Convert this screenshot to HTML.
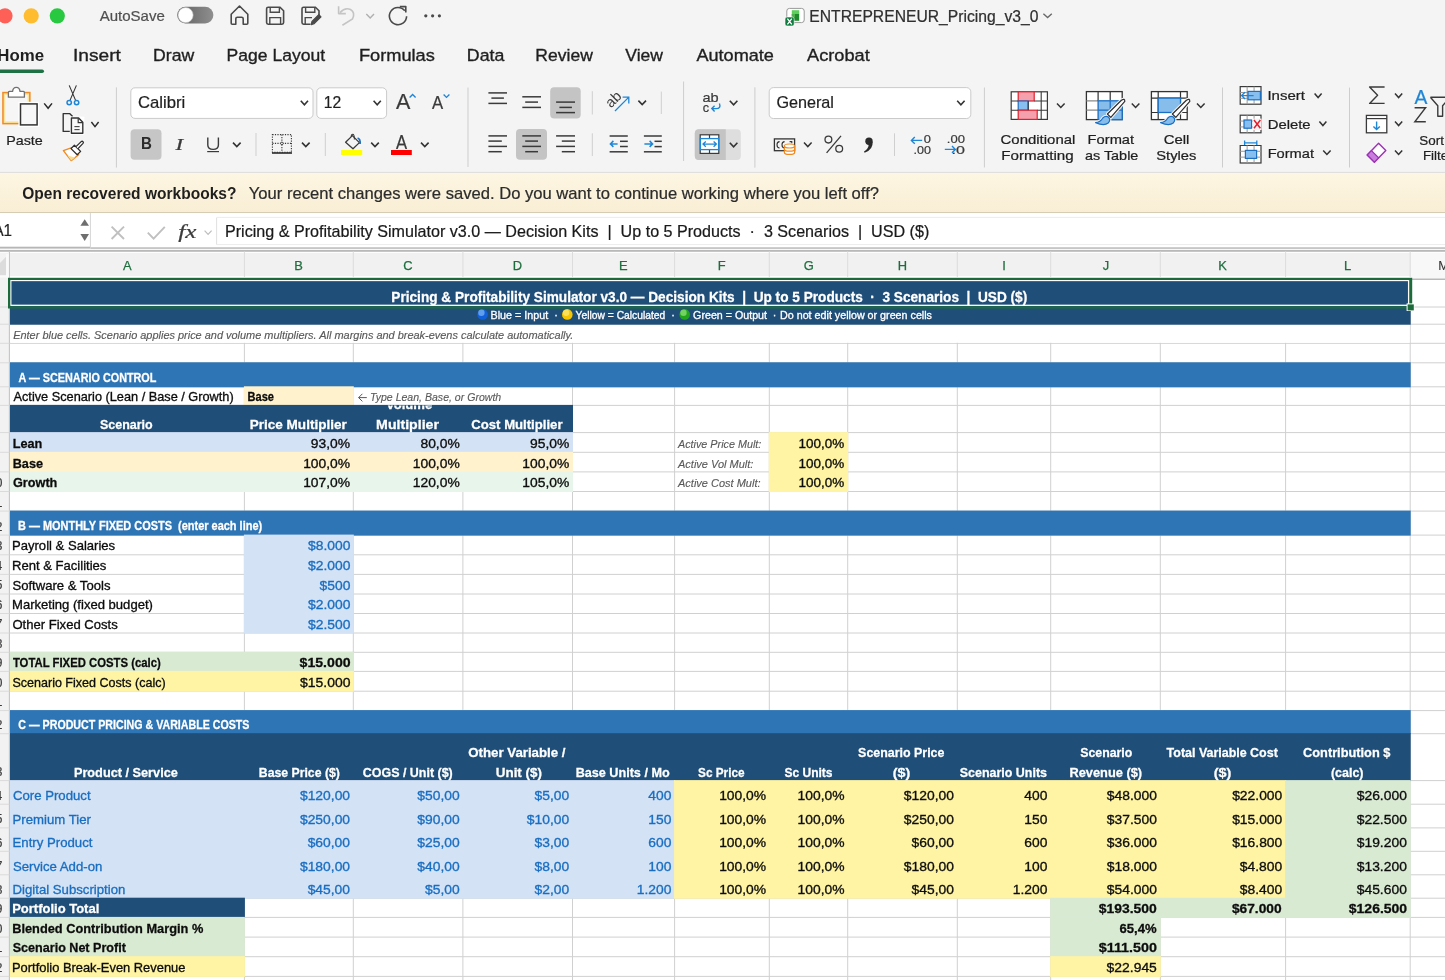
<!DOCTYPE html>
<html><head><meta charset="utf-8"><title>ENTREPRENEUR_Pricing_v3_0</title>
<style>
html,body{margin:0;padding:0;background:#f4f4f4;overflow:hidden;width:1445px;height:980px}
svg{display:block;font-family:"Liberation Sans",sans-serif;will-change:transform}
text{white-space:pre}
</style></head><body>
<svg width="1445" height="980" viewBox="0 0 1445 980">
<rect x="0.00" y="0.00" width="1445.00" height="172.50" fill="#f4f4f4" />
<circle cx="5.00" cy="15.80" r="7.60" fill="#fe5f57" />
<circle cx="31.20" cy="15.80" r="7.60" fill="#febc2e" />
<circle cx="57.30" cy="15.80" r="7.60" fill="#28c840" />
<text x="99.70" y="21.30" font-size="15.0" fill="#505050"   stroke="#505050" stroke-width="0.22">AutoSave</text>
<defs><linearGradient id="tg" x1="0" x2="1"><stop offset="0" stop-color="#5f5f5f"/><stop offset="1" stop-color="#8f8f8f"/></linearGradient><radialGradient id="bd" cx="0.35" cy="0.3" r="0.8"><stop offset="0" stop-color="#ffffff"/><stop offset="1" stop-color="#dddddd"/></radialGradient></defs>
<rect x="177.20" y="6.80" width="36.20" height="16.60" fill="url(#tg)" rx="8.3" />
<circle cx="185.60" cy="15.10" r="7.60" fill="#ffffff" stroke="#b8b8b8" stroke-width="0.6" />
<path d="M231.2 14.2 L239.5 6.0 L247.8 14.2 L247.8 23.2 Q247.8 24.2 246.8 24.2 L243.2 24.2 L243.2 18.8 Q243.2 17.2 241.6 17.2 L237.4 17.2 Q235.8 17.2 235.8 18.8 L235.8 24.2 L232.2 24.2 Q231.2 24.2 231.2 23.2 Z" stroke="#4a4a4a" fill="none" stroke-width="1.6" stroke-linejoin="round"/>
<path d="M268.2 7.2 L280.0 7.2 L283.6 10.8 L283.6 22.6 Q283.6 24.2 282.0 24.2 L268.2 24.2 Q266.6 24.2 266.6 22.6 L266.6 8.8 Q266.6 7.2 268.2 7.2 Z" stroke="#4a4a4a" fill="none" stroke-width="1.6" />
<path d="M270.2 7.6 L270.2 12.2 L279.4 12.2 L279.4 7.6" stroke="#4a4a4a" fill="none" stroke-width="1.4" />
<path d="M269.8 24.0 L269.8 17.6 L280.6 17.6 L280.6 24.0" stroke="#4a4a4a" fill="none" stroke-width="1.4" />
<path d="M303.6 7.2 L315.4 7.2 L319.0 10.8 L319.0 15.5 M310.5 24.2 L303.6 24.2 Q302.0 24.2 302.0 22.6 L302.0 8.8 Q302.0 7.2 303.6 7.2" stroke="#4a4a4a" fill="none" stroke-width="1.6" />
<path d="M305.6 7.6 L305.6 12.2 L314.8 12.2 L314.8 7.6" stroke="#4a4a4a" fill="none" stroke-width="1.4" />
<path d="M305.2 24.0 L305.2 17.6 L312.0 17.6" stroke="#4a4a4a" fill="none" stroke-width="1.4" />
<path d="M311.2 24.6 L312.0 21.4 L318.8 14.6 L321.0 16.8 L314.2 23.6 Z" stroke="#4a4a4a" fill="#4a4a4a" stroke-width="1.2" stroke-linejoin="round"/>
<path d="M340.0 12.6 Q345.0 7.0 350.5 9.5 Q355.6 12.6 352.5 19.0 L342.4 25.2" stroke="#c4c4c4" fill="none" stroke-width="1.6" />
<path d="M338.6 6.2 L338.6 13.6 L345.8 13.6" stroke="#c4c4c4" fill="none" stroke-width="1.6" stroke-linejoin="round"/>
<path d="M366.3 14.0 L370.2 18.0 L374.0 14.0" stroke="#b0b0b0" fill="none" stroke-width="1.4" />
<path d="M404.8 10.8 A8.6 8.6 0 1 0 406.6 16.2" stroke="#4a4a4a" fill="none" stroke-width="1.6" />
<path d="M399.8 6.6 L405.8 6.6 L405.8 12.4" stroke="#4a4a4a" fill="none" stroke-width="1.6" stroke-linejoin="round"/>
<circle cx="425.80" cy="15.80" r="1.60" fill="#4a4a4a" />
<circle cx="432.60" cy="15.80" r="1.60" fill="#4a4a4a" />
<circle cx="439.40" cy="15.80" r="1.60" fill="#4a4a4a" />
<rect x="786.80" y="8.40" width="17.40" height="14.20" fill="#ffffff" rx="2.6" stroke="#9a9a9a" stroke-width="1.0" />
<rect x="791.80" y="10.20" width="7.40" height="4.00" fill="#5ccf5c" />
<rect x="791.80" y="14.00" width="7.40" height="6.80" fill="#1e8a2e" />
<rect x="791.80" y="14.00" width="3.20" height="3.40" fill="#4fae4f" />
<rect x="785.00" y="17.00" width="9.20" height="9.00" fill="#0f7a3e" rx="2.0" stroke="#ffffff" stroke-width="0.6" />
<path d="M787.4 18.6 L791.8 24.4 M791.8 18.6 L787.4 24.4" stroke="#ffffff" fill="none" stroke-width="1.3" />
<text x="809.31" y="21.80" font-size="15.8" fill="#2f2f2f"  textLength="229.07" lengthAdjust="spacingAndGlyphs"  stroke="#2f2f2f" stroke-width="0.22">ENTREPRENEUR_Pricing_v3_0</text>
<path d="M1043.4 13.8 L1047.6 17.6 L1051.8 13.8" stroke="#6a6a6a" fill="none" stroke-width="1.4" />
<text x="-2.68" y="61.20" font-size="17.2" fill="#1f1f1f" font-weight="bold" textLength="46.83" lengthAdjust="spacingAndGlyphs" >Home</text>
<text x="73.03" y="61.20" font-size="17.2" fill="#1f1f1f"  textLength="47.86" lengthAdjust="spacingAndGlyphs"  stroke="#1f1f1f" stroke-width="0.35">Insert</text>
<text x="153.06" y="61.20" font-size="17.2" fill="#1f1f1f"  textLength="41.15" lengthAdjust="spacingAndGlyphs"  stroke="#1f1f1f" stroke-width="0.35">Draw</text>
<text x="226.57" y="61.20" font-size="17.2" fill="#1f1f1f"  textLength="98.51" lengthAdjust="spacingAndGlyphs"  stroke="#1f1f1f" stroke-width="0.35">Page Layout</text>
<text x="358.92" y="61.20" font-size="17.2" fill="#1f1f1f"  textLength="75.92" lengthAdjust="spacingAndGlyphs"  stroke="#1f1f1f" stroke-width="0.35">Formulas</text>
<text x="466.85" y="61.20" font-size="17.2" fill="#1f1f1f"  textLength="37.51" lengthAdjust="spacingAndGlyphs"  stroke="#1f1f1f" stroke-width="0.35">Data</text>
<text x="535.37" y="61.20" font-size="17.2" fill="#1f1f1f"  textLength="57.45" lengthAdjust="spacingAndGlyphs"  stroke="#1f1f1f" stroke-width="0.35">Review</text>
<text x="625.30" y="61.20" font-size="17.2" fill="#1f1f1f"  textLength="37.72" lengthAdjust="spacingAndGlyphs"  stroke="#1f1f1f" stroke-width="0.35">View</text>
<text x="696.40" y="61.20" font-size="17.2" fill="#1f1f1f"  textLength="77.50" lengthAdjust="spacingAndGlyphs"  stroke="#1f1f1f" stroke-width="0.35">Automate</text>
<text x="807.10" y="61.20" font-size="17.2" fill="#1f1f1f"  textLength="62.58" lengthAdjust="spacingAndGlyphs"  stroke="#1f1f1f" stroke-width="0.35">Acrobat</text>
<rect x="-4.00" y="69.40" width="48.00" height="3.60" fill="#1e7145" rx="1.8" />
<rect x="2.20" y="91.80" width="28.40" height="32.60" fill="#f08a24" />
<rect x="3.70" y="93.30" width="25.40" height="29.60" fill="#fbe39b" />
<rect x="5.20" y="94.80" width="22.40" height="26.60" fill="#f6f6f6" />
<path d="M8.4 97.2 L8.4 92.4 Q8.4 91.4 9.4 91.4 L12.6 91.4 Q13.0 87.4 16.3 87.4 Q19.6 87.4 20.0 91.4 L23.4 91.4 Q24.4 91.4 24.4 92.4 L24.4 97.2 Z" stroke="#707070" fill="#ffffff" stroke-width="1.3" stroke-linejoin="round"/>
<rect x="18.40" y="101.80" width="20.80" height="25.20" fill="#ffffff" />
<rect x="19.80" y="103.20" width="18.00" height="22.40" fill="#f7f7f7" />
<rect x="20.50" y="103.90" width="16.60" height="21.00" fill="none" stroke="#333333" stroke-width="1.5" />
<path d="M44.2 103.4 L48.1 108.2 L52.0 103.4" stroke="#2a2a2a" fill="none" stroke-width="1.5" />
<text x="6.20" y="144.50" font-size="13.0" fill="#1f1f1f"  textLength="36.58" lengthAdjust="spacingAndGlyphs"  stroke="#1f1f1f" stroke-width="0.2">Paste</text>
<path d="M69.2 85.4 L75.6 100.4 M76.4 85.4 L70.0 100.4" stroke="#333333" fill="none" stroke-width="1.1" />
<circle cx="69.20" cy="102.60" r="2.20" fill="none" stroke="#1f86d6" stroke-width="1.5" />
<circle cx="76.60" cy="102.60" r="2.20" fill="none" stroke="#1f86d6" stroke-width="1.5" />
<path d="M70.2 131.4 L63.2 131.4 L63.2 113.6 L69.6 113.6 L72.6 116.6" stroke="#333333" fill="none" stroke-width="1.4" stroke-linejoin="round"/>
<rect x="69.80" y="116.60" width="14.60" height="18.20" fill="#ffffff" />
<path d="M71.4 118.0 L78.6 118.0 L82.8 122.2 L82.8 133.2 L71.4 133.2 Z" stroke="#333333" fill="#f8f8f8" stroke-width="1.4" stroke-linejoin="round"/>
<path d="M78.2 118.2 L78.2 122.6 L82.6 122.6" stroke="#333333" fill="none" stroke-width="1.2" />
<line x1="74.40" y1="126.60" x2="79.60" y2="126.60" stroke="#444" stroke-width="1.1" />
<line x1="74.40" y1="129.60" x2="79.60" y2="129.60" stroke="#444" stroke-width="1.1" />
<path d="M91.4 122.0 L95.0 126.6 L98.6 122.0" stroke="#2a2a2a" fill="none" stroke-width="1.5" />
<path d="M63.4 150.6 L71.8 147.6 L78.6 154.8 L71.2 160.6 Z" stroke="#ef8a22" fill="#ffffff" stroke-width="1.4" stroke-linejoin="round"/>
<path d="M67.4 155.4 L75.2 157.6 L71.2 160.6 Z" stroke="none" fill="#f9dc8c" stroke-width="1" />
<path d="M71.0 148.6 L74.4 145.2 L80.6 151.4 L77.2 154.8 Z" stroke="#2e2e2e" fill="#ffffff" stroke-width="1.3" stroke-linejoin="round"/>
<path d="M76.0 146.6 L81.2 141.6 Q82.2 140.8 83.0 141.6 Q83.8 142.4 83.0 143.4 L78.0 148.6" stroke="#2e2e2e" fill="#ffffff" stroke-width="1.3" stroke-linejoin="round"/>
<line x1="116.40" y1="87.40" x2="116.40" y2="167.60" stroke="#cdcdcd" stroke-width="1" />
<rect x="130.80" y="87.80" width="182.20" height="30.60" fill="#ffffff" rx="4.2" stroke="#cacaca" stroke-width="1" />
<text x="137.90" y="108.40" font-size="16.6" fill="#1f1f1f"  textLength="47.30" lengthAdjust="spacingAndGlyphs"  stroke="#1f1f1f" stroke-width="0.22">Calibri</text>
<path d="M300.8 100.8 L304.4 104.8 L308.0 100.8" stroke="#333" fill="none" stroke-width="1.6" />
<rect x="316.80" y="87.80" width="69.80" height="30.60" fill="#ffffff" rx="4.2" stroke="#cacaca" stroke-width="1" />
<text x="323.77" y="108.40" font-size="16.6" fill="#1f1f1f"  textLength="17.42" lengthAdjust="spacingAndGlyphs"  stroke="#1f1f1f" stroke-width="0.22">12</text>
<path d="M373.6 100.8 L377.2 104.8 L380.8 100.8" stroke="#333" fill="none" stroke-width="1.6" />
<text x="395.90" y="109.30" font-size="22.4" fill="#3a3a3a"  textLength="14.34" lengthAdjust="spacingAndGlyphs"  stroke="#3a3a3a" stroke-width="0.22">A</text>
<path d="M409.6 97.6 L412.6 94.6 L415.6 97.6" stroke="#1f86d6" fill="none" stroke-width="1.4" />
<text x="432.00" y="109.30" font-size="17.6" fill="#3a3a3a"  textLength="11.14" lengthAdjust="spacingAndGlyphs"  stroke="#3a3a3a" stroke-width="0.22">A</text>
<path d="M443.6 94.6 L446.5 97.4 L449.4 94.6" stroke="#1f86d6" fill="none" stroke-width="1.4" />
<rect x="130.60" y="129.20" width="30.90" height="30.50" fill="#c6c6c6" rx="4" />
<text x="140.88" y="149.10" font-size="16.4" fill="#2a2a2a" font-weight="bold" textLength="10.91" lengthAdjust="spacingAndGlyphs" >B</text>
<text x="175.53" y="150.00" font-size="17.4" fill="#3a3a3a" font-style="italic" font-family="Liberation Serif" textLength="7.64" lengthAdjust="spacingAndGlyphs"  stroke="#3a3a3a" stroke-width="0.22">I</text>
<path d="M207.8 137.4 L207.8 145.0 Q207.8 149.4 213.1 149.4 Q218.4 149.4 218.4 145.0 L218.4 137.4" stroke="#3a3a3a" fill="none" stroke-width="1.4" />
<line x1="207.20" y1="151.60" x2="219.00" y2="151.60" stroke="#3a3a3a" stroke-width="1.2" />
<path d="M233.0 142.6 L236.8 146.6 L240.6 142.6" stroke="#333" fill="none" stroke-width="1.6" />
<line x1="256.00" y1="133.00" x2="256.00" y2="156.00" stroke="#cfcfcf" stroke-width="1" />
<g stroke="#3a3a3a" stroke-width="1.1" stroke-dasharray="1.2 1.3" fill="none"><rect x="272.4" y="134.6" width="19.0" height="17.6"/><line x1="281.9" y1="134.6" x2="281.9" y2="152"/><line x1="272.4" y1="143.4" x2="291.4" y2="143.4"/></g>
<line x1="272.00" y1="153.00" x2="292.00" y2="153.00" stroke="#2a2a2a" stroke-width="1.6" />
<circle cx="281.90" cy="143.40" r="1.30" fill="#ffffff" stroke="#3a3a3a" stroke-width="0.9" />
<path d="M302.0 142.6 L305.8 146.6 L309.6 142.6" stroke="#333" fill="none" stroke-width="1.6" />
<line x1="325.30" y1="133.00" x2="325.30" y2="156.00" stroke="#cfcfcf" stroke-width="1" />
<path d="M345.6 142.2 L352.4 135.6 L359.4 142.6 L353.0 148.8 Z" stroke="#3a3a3a" fill="none" stroke-width="1.3" stroke-linejoin="round"/>
<path d="M351.2 136.8 Q351.2 134.2 352.8 134.2 Q354.4 134.2 354.4 139.6" stroke="#3a3a3a" fill="none" stroke-width="1.1" />
<path d="M357.6 138.0 Q360.6 139.0 360.0 144.0" stroke="#1f6fbf" fill="none" stroke-width="1.8" />
<rect x="341.00" y="150.00" width="21.20" height="5.00" fill="#ffff00" />
<path d="M371.2 142.6 L375.0 146.6 L378.8 142.6" stroke="#333" fill="none" stroke-width="1.6" />
<text x="395.90" y="148.50" font-size="19.6" fill="#3a3a3a"  textLength="11.08" lengthAdjust="spacingAndGlyphs"  stroke="#3a3a3a" stroke-width="0.22">A</text>
<rect x="391.00" y="150.00" width="20.80" height="5.00" fill="#ff0000" />
<path d="M421.0 142.6 L424.8 146.6 L428.6 142.6" stroke="#333" fill="none" stroke-width="1.6" />
<line x1="468.00" y1="87.50" x2="468.00" y2="167.00" stroke="#cdcdcd" stroke-width="1" />
<line x1="488.40" y1="92.90" x2="507.00" y2="92.90" stroke="#3a3a3a" stroke-width="1.5" />
<line x1="491.40" y1="98.10" x2="503.90" y2="98.10" stroke="#3a3a3a" stroke-width="1.5" />
<line x1="488.40" y1="103.40" x2="507.00" y2="103.40" stroke="#3a3a3a" stroke-width="1.5" />
<line x1="522.30" y1="96.80" x2="541.00" y2="96.80" stroke="#3a3a3a" stroke-width="1.5" />
<line x1="525.20" y1="102.10" x2="538.00" y2="102.10" stroke="#3a3a3a" stroke-width="1.5" />
<line x1="522.30" y1="107.40" x2="541.00" y2="107.40" stroke="#3a3a3a" stroke-width="1.5" />
<rect x="550.20" y="87.20" width="30.50" height="31.20" fill="#c4c4c4" rx="4" />
<line x1="556.10" y1="102.10" x2="575.00" y2="102.10" stroke="#3a3a3a" stroke-width="1.5" />
<line x1="559.40" y1="107.40" x2="571.90" y2="107.40" stroke="#3a3a3a" stroke-width="1.5" />
<line x1="556.10" y1="112.60" x2="575.00" y2="112.60" stroke="#3a3a3a" stroke-width="1.5" />
<line x1="592.30" y1="91.20" x2="592.30" y2="114.50" stroke="#cfcfcf" stroke-width="1" />
<text x="0" y="0" font-size="14.6" fill="#3a3a3a" transform="translate(611.0,108.4) rotate(-45)">ab</text>
<path d="M615.0 111.0 L628.6 97.4 M622.6 97.2 L628.8 97.2 L628.8 103.4" stroke="#1f86d6" fill="none" stroke-width="1.3" />
<path d="M638.4 100.6 L642.2 104.6 L646.0 100.6" stroke="#333" fill="none" stroke-width="1.6" />
<line x1="488.40" y1="135.90" x2="507.00" y2="135.90" stroke="#3a3a3a" stroke-width="1.5" />
<line x1="488.40" y1="141.10" x2="501.80" y2="141.10" stroke="#3a3a3a" stroke-width="1.5" />
<line x1="488.40" y1="146.40" x2="507.00" y2="146.40" stroke="#3a3a3a" stroke-width="1.5" />
<line x1="488.40" y1="151.70" x2="501.80" y2="151.70" stroke="#3a3a3a" stroke-width="1.5" />
<rect x="516.00" y="128.90" width="31.00" height="30.90" fill="#c4c4c4" rx="4" />
<line x1="522.30" y1="135.90" x2="541.00" y2="135.90" stroke="#3a3a3a" stroke-width="1.5" />
<line x1="525.20" y1="141.10" x2="538.00" y2="141.10" stroke="#3a3a3a" stroke-width="1.5" />
<line x1="522.30" y1="146.40" x2="541.00" y2="146.40" stroke="#3a3a3a" stroke-width="1.5" />
<line x1="525.20" y1="151.70" x2="538.00" y2="151.70" stroke="#3a3a3a" stroke-width="1.5" />
<line x1="556.10" y1="135.90" x2="575.00" y2="135.90" stroke="#3a3a3a" stroke-width="1.5" />
<line x1="561.80" y1="141.10" x2="575.00" y2="141.10" stroke="#3a3a3a" stroke-width="1.5" />
<line x1="556.10" y1="146.40" x2="575.00" y2="146.40" stroke="#3a3a3a" stroke-width="1.5" />
<line x1="561.80" y1="151.70" x2="575.00" y2="151.70" stroke="#3a3a3a" stroke-width="1.5" />
<line x1="592.30" y1="133.30" x2="592.30" y2="156.00" stroke="#cfcfcf" stroke-width="1" />
<line x1="609.60" y1="136.00" x2="627.80" y2="136.00" stroke="#3a3a3a" stroke-width="1.5" />
<line x1="620.00" y1="141.30" x2="627.80" y2="141.30" stroke="#3a3a3a" stroke-width="1.5" />
<line x1="620.00" y1="146.50" x2="627.80" y2="146.50" stroke="#3a3a3a" stroke-width="1.5" />
<line x1="609.60" y1="151.80" x2="627.80" y2="151.80" stroke="#3a3a3a" stroke-width="1.5" />
<path d="M617.6 143.9 L610.4 143.9 M613.4 140.9 L610.4 143.9 L613.4 146.9" stroke="#1f86d6" fill="none" stroke-width="1.5" />
<line x1="643.90" y1="136.00" x2="661.80" y2="136.00" stroke="#3a3a3a" stroke-width="1.5" />
<line x1="654.50" y1="141.30" x2="661.80" y2="141.30" stroke="#3a3a3a" stroke-width="1.5" />
<line x1="654.50" y1="146.60" x2="661.80" y2="146.60" stroke="#3a3a3a" stroke-width="1.5" />
<line x1="643.90" y1="151.80" x2="661.80" y2="151.80" stroke="#3a3a3a" stroke-width="1.5" />
<path d="M644.4 143.9 L652.6 143.9 M649.6 140.9 L652.6 143.9 L649.6 146.9" stroke="#1f86d6" fill="none" stroke-width="1.5" />
<line x1="661.30" y1="91.60" x2="661.30" y2="114.00" stroke="#cfcfcf" stroke-width="1" />
<line x1="683.60" y1="81.50" x2="683.60" y2="161.00" stroke="#cdcdcd" stroke-width="1" />
<text x="702.42" y="101.80" font-size="12.6" fill="#3a3a3a"  textLength="16.16" lengthAdjust="spacingAndGlyphs"  stroke="#3a3a3a" stroke-width="0.22">ab</text>
<text x="702.70" y="112.00" font-size="12.6" fill="#3a3a3a"   stroke="#3a3a3a" stroke-width="0.22">c</text>
<path d="M719.4 103.6 Q721.4 108.6 716.0 108.6 L712.0 108.6 M714.6 105.8 L711.8 108.6 L714.6 111.6" stroke="#1f86d6" fill="none" stroke-width="1.4" />
<path d="M729.8 100.8 L733.6 104.8 L737.4 100.8" stroke="#333" fill="none" stroke-width="1.6" />
<rect x="694.80" y="129.30" width="46.00" height="30.70" fill="#dedede" rx="4" />
<path d="M698.8 129.3 L725.8 129.3 L725.8 160 L698.8 160 Q694.8 160 694.8 156 L694.8 133.3 Q694.8 129.3 698.8 129.3 Z" stroke="none" fill="#c4c4c4" stroke-width="1" />
<rect x="700.20" y="134.80" width="18.60" height="18.60" fill="#ffffff" stroke="#3a3a3a" stroke-width="1.2" />
<line x1="709.50" y1="134.80" x2="709.50" y2="153.40" stroke="#3a3a3a" stroke-width="1.2" />
<rect x="700.00" y="138.40" width="19.00" height="11.40" fill="#ffffff" />
<rect x="700.40" y="138.60" width="18.20" height="11.00" fill="none" stroke="#1f86d6" stroke-width="1.3" />
<path d="M703.0 144.1 L716.4 144.1 M705.8 141.5 L703.0 144.1 L705.8 146.7 M713.6 141.5 L716.4 144.1 L713.6 146.7" stroke="#1f86d6" fill="none" stroke-width="1.3" />
<path d="M729.8 142.8 L733.6 146.8 L737.4 142.8" stroke="#333" fill="none" stroke-width="1.6" />
<line x1="754.90" y1="87.30" x2="754.90" y2="167.70" stroke="#cdcdcd" stroke-width="1" />
<rect x="769.20" y="87.60" width="201.60" height="30.90" fill="#ffffff" rx="4.2" stroke="#cacaca" stroke-width="1" />
<text x="776.42" y="108.20" font-size="16.6" fill="#1f1f1f"  textLength="57.54" lengthAdjust="spacingAndGlyphs"  stroke="#1f1f1f" stroke-width="0.22">General</text>
<path d="M957.2 100.8 L960.9 104.8 L964.6 100.8" stroke="#333" fill="none" stroke-width="1.6" />
<rect x="774.40" y="138.90" width="20.20" height="11.80" fill="none" stroke="#333333" stroke-width="1.3" />
<path d="M779.6 141.6 Q777.0 141.6 777.0 144.8 Q777.0 148.0 779.6 148.0 M784.6 141.6 Q782.0 141.6 782.0 144.8 Q782.0 148.0 784.6 148.0 M789.6 141.6 L791.8 141.6 L791.8 143.2" stroke="#333333" stroke-width="1.1" fill="none"/>
<g stroke="#ef8a22" stroke-width="1.2" fill="#ffffff"><path d="M784.4 146.0 L784.4 152.4 Q784.4 154.4 789.5 154.4 Q794.6 154.4 794.6 152.4 L794.6 146.0 Z"/><ellipse cx="789.5" cy="146.0" rx="5.1" ry="2.0"/><path d="M784.4 149.2 Q784.4 151.2 789.5 151.2 Q794.6 151.2 794.6 149.2" fill="none"/></g>
<path d="M804.0 142.6 L807.8 146.6 L811.6 142.6" stroke="#333" fill="none" stroke-width="1.5" />
<circle cx="828.40" cy="139.60" r="3.40" fill="none" stroke="#3a3a3a" stroke-width="1.3" />
<circle cx="839.20" cy="148.80" r="3.40" fill="none" stroke="#3a3a3a" stroke-width="1.3" />
<line x1="841.00" y1="135.80" x2="826.60" y2="152.80" stroke="#3a3a3a" stroke-width="1.3" />
<circle cx="869.00" cy="141.20" r="3.70" fill="#2a2a2a" />
<path d="M872.6 141.8 Q873.4 149.6 864.6 152.8 L864.0 151.6 Q868.8 148.4 868.6 144.4 Z" stroke="none" fill="#2a2a2a" stroke-width="1" />
<line x1="894.50" y1="133.30" x2="894.50" y2="156.00" stroke="#cfcfcf" stroke-width="1" />
<text x="923.87" y="143.10" font-size="11.8" fill="#3a3a3a"  textLength="7.13" lengthAdjust="spacingAndGlyphs"  stroke="#3a3a3a" stroke-width="0.22">0</text>
<text x="913.54" y="153.50" font-size="11.8" fill="#3a3a3a"  textLength="17.45" lengthAdjust="spacingAndGlyphs"  stroke="#3a3a3a" stroke-width="0.22">.00</text>
<path d="M922.2 140.4 L911.4 140.4 M914.8 137.0 L911.4 140.4 L914.8 143.8" stroke="#1f86d6" fill="none" stroke-width="1.4" />
<text x="946.80" y="143.10" font-size="11.8" fill="#3a3a3a"  textLength="18.10" lengthAdjust="spacingAndGlyphs"  stroke="#3a3a3a" stroke-width="0.22">.00</text>
<text x="951.64" y="153.50" font-size="11.8" fill="#3a3a3a"  textLength="13.35" lengthAdjust="spacingAndGlyphs"  stroke="#3a3a3a" stroke-width="0.22">.0</text>
<path d="M944.8 149.4 L955.4 149.4 M952.0 146.0 L955.4 149.4 L952.0 152.8" stroke="#1f86d6" fill="none" stroke-width="1.4" />
<line x1="984.40" y1="87.50" x2="984.40" y2="167.50" stroke="#cdcdcd" stroke-width="1" />
<g transform="translate(1011.2,91.8)"><rect x="0" y="0" width="36.2" height="27.6" fill="#ffffff" stroke="#3a3a3a" stroke-width="1.2"/><rect x="7" y="0" width="16" height="9.2" fill="#f4a1ad" stroke="#e0202e" stroke-width="1.2"/><rect x="7" y="9.2" width="10" height="9.2" fill="#86bff0" stroke="#1f6fbf" stroke-width="1.2"/><rect x="7" y="18.4" width="19" height="9.2" fill="#f4a1ad" stroke="#e0202e" stroke-width="1.2"/><path d="M0 9.2 H7 M0 18.4 H7 M23 9.2 H36.2 M26 18.4 H36.2 M30 0 V27.6 M17 9.2 V18.4" stroke="#3a3a3a" stroke-width="1.1"/></g>
<path d="M1057.0 103.4 L1060.8 107.4 L1064.6 103.4" stroke="#333" fill="none" stroke-width="1.5" />
<text x="1000.59" y="144.40" font-size="12.6" fill="#1f1f1f"  textLength="74.76" lengthAdjust="spacingAndGlyphs"  stroke="#1f1f1f" stroke-width="0.22">Conditional</text>
<text x="1001.20" y="159.70" font-size="12.6" fill="#1f1f1f"  textLength="72.48" lengthAdjust="spacingAndGlyphs"  stroke="#1f1f1f" stroke-width="0.22">Formatting</text>
<g transform="translate(1086.4,91.6)"><rect x="0" y="0" width="35.8" height="28" fill="#ffffff" stroke="#333333" stroke-width="1.3"/><path d="M0 9.2 H11.7 M0 18.6 H11.7" stroke="#8a8a8a" stroke-width="1.2"/><path d="M11.7 0 V9.2 M23.8 0 V9.2" stroke="#333333" stroke-width="1.2"/><rect x="11.7" y="9.2" width="24.1" height="18.8" fill="#86bdea" stroke="#1a6fc4" stroke-width="1.3"/><path d="M11.7 18.6 H35.8 M23.8 9.2 V28" stroke="#1a6fc4" stroke-width="1.2"/><path d="M21.0 22.4 L35.0 8.6 Q38.6 6.4 38.4 9.8 L24.4 25.8 Z M9.2 31.0 Q14.0 30.6 16.4 26.4 Q19.0 23.6 22.0 25.4 Q24.8 28.2 21.8 31.4 Q17.6 34.8 9.2 31.0 Z" fill="#ffffff" stroke="#f4f4f4" stroke-width="3.2" stroke-linejoin="round"/><path d="M21.0 22.4 L35.0 8.6 Q38.6 6.4 38.4 9.8 L24.4 25.8 Z" fill="#ffffff" stroke="#2e2e2e" stroke-width="1.2" stroke-linejoin="round"/><path d="M9.2 31.0 Q14.0 30.6 16.4 26.4 Q19.0 23.6 22.0 25.4 Q24.8 28.2 21.8 31.4 Q17.6 34.8 9.2 31.0 Z" fill="#86bdea" stroke="#1a6fc4" stroke-width="1.2" stroke-linejoin="round"/></g>
<path d="M1131.8 103.4 L1135.6 107.4 L1139.4 103.4" stroke="#333" fill="none" stroke-width="1.5" />
<text x="1087.64" y="144.40" font-size="12.6" fill="#1f1f1f"  textLength="46.47" lengthAdjust="spacingAndGlyphs"  stroke="#1f1f1f" stroke-width="0.22">Format</text>
<text x="1084.93" y="159.70" font-size="12.6" fill="#1f1f1f"  textLength="53.45" lengthAdjust="spacingAndGlyphs"  stroke="#1f1f1f" stroke-width="0.22">as Table</text>
<g transform="translate(1151.4,91.6)"><rect x="0" y="0" width="35.8" height="28" fill="#ffffff" stroke="#333333" stroke-width="1.3"/><path d="M0 6.5 H35.8 M0 20.9 H35.8 M6.8 0 V28 M29.1 0 V28" stroke="#333333" stroke-width="1.2"/><rect x="6.8" y="6.5" width="22.3" height="14.4" fill="#86bdea" stroke="#1a6fc4" stroke-width="1.3"/><path d="M21.0 22.4 L35.0 8.6 Q38.6 6.4 38.4 9.8 L24.4 25.8 Z M9.2 31.0 Q14.0 30.6 16.4 26.4 Q19.0 23.6 22.0 25.4 Q24.8 28.2 21.8 31.4 Q17.6 34.8 9.2 31.0 Z" fill="#ffffff" stroke="#f4f4f4" stroke-width="3.2" stroke-linejoin="round"/><path d="M21.0 22.4 L35.0 8.6 Q38.6 6.4 38.4 9.8 L24.4 25.8 Z" fill="#ffffff" stroke="#2e2e2e" stroke-width="1.2" stroke-linejoin="round"/><path d="M9.2 31.0 Q14.0 30.6 16.4 26.4 Q19.0 23.6 22.0 25.4 Q24.8 28.2 21.8 31.4 Q17.6 34.8 9.2 31.0 Z" fill="#86bdea" stroke="#1a6fc4" stroke-width="1.2" stroke-linejoin="round"/></g>
<path d="M1197.0 103.4 L1200.8 107.4 L1204.6 103.4" stroke="#333" fill="none" stroke-width="1.5" />
<text x="1163.69" y="144.40" font-size="12.6" fill="#1f1f1f"  textLength="25.76" lengthAdjust="spacingAndGlyphs"  stroke="#1f1f1f" stroke-width="0.22">Cell</text>
<text x="1156.32" y="159.70" font-size="12.6" fill="#1f1f1f"  textLength="40.05" lengthAdjust="spacingAndGlyphs"  stroke="#1f1f1f" stroke-width="0.22">Styles</text>
<line x1="1222.50" y1="87.50" x2="1222.50" y2="167.50" stroke="#cdcdcd" stroke-width="1" />
<g transform="translate(1240.2,86.6)"><rect x="0" y="0" width="20.8" height="17.6" fill="#ffffff" stroke="#3a3a3a" stroke-width="1.2"/><path d="M0 5.87 H20.8 M0 11.73 H20.8 M6.93 0 V17.6 M13.87 0 V17.6" stroke="#9a9a9a" stroke-width="1.0"/></g>
<rect x="1248.00" y="91.40" width="12.40" height="8.40" fill="#86bff0" />
<rect x="1248.00" y="91.40" width="12.40" height="8.40" fill="none" stroke="#1f6fbf" stroke-width="1.2" />
<path d="M1253.6 95.6 L1241.6 95.6 M1245.0 92.2 L1241.6 95.6 L1245.0 99.0" stroke="#1f86d6" fill="none" stroke-width="1.4" />
<text x="1267.42" y="100.10" font-size="13.0" fill="#1f1f1f"  textLength="37.50" lengthAdjust="spacingAndGlyphs"  stroke="#1f1f1f" stroke-width="0.22">Insert</text>
<path d="M1314.6 93.6 L1318.1 97.6 L1321.6 93.6" stroke="#333" fill="none" stroke-width="1.5" />
<g transform="translate(1240.2,115.2)"><rect x="0" y="0" width="20.8" height="17.6" fill="#ffffff" stroke="#3a3a3a" stroke-width="1.2"/><path d="M0 5.87 H20.8 M0 11.73 H20.8 M6.93 0 V17.6 M13.87 0 V17.6" stroke="#9a9a9a" stroke-width="1.0"/></g>
<rect x="1244.00" y="120.00" width="7.60" height="8.20" fill="#86bff0" />
<rect x="1244.00" y="120.00" width="7.60" height="8.20" fill="none" stroke="#1f6fbf" stroke-width="1.2" />
<rect x="1252.60" y="118.60" width="9.00" height="11.40" fill="#f4f4f4" />
<path d="M1254.0 120.0 L1260.4 128.2 M1260.4 120.0 L1254.0 128.2" stroke="#e0202e" fill="none" stroke-width="1.5" />
<text x="1267.66" y="129.00" font-size="13.0" fill="#1f1f1f"  textLength="42.95" lengthAdjust="spacingAndGlyphs"  stroke="#1f1f1f" stroke-width="0.22">Delete</text>
<path d="M1319.4 121.6 L1322.9 125.6 L1326.4 121.6" stroke="#333" fill="none" stroke-width="1.5" />
<g transform="translate(1240.2,145.4)"><rect x="0" y="0" width="20.8" height="17.6" fill="#ffffff" stroke="#3a3a3a" stroke-width="1.2"/><path d="M0 5.87 H20.8 M0 11.73 H20.8 M6.93 0 V17.6 M13.87 0 V17.6" stroke="#9a9a9a" stroke-width="1.0"/></g>
<rect x="1245.40" y="150.40" width="11.20" height="8.00" fill="#86bff0" />
<rect x="1245.40" y="150.40" width="11.20" height="8.00" fill="none" stroke="#1f6fbf" stroke-width="1.2" />
<rect x="1238.60" y="140.80" width="23.80" height="4.20" fill="#f4f4f4" />
<path d="M1244.6 142.8 L1256.8 142.8 M1244.6 140.6 V145.0 M1256.8 140.6 V145.0" stroke="#1f86d6" fill="none" stroke-width="1.3" />
<text x="1267.67" y="157.60" font-size="13.0" fill="#1f1f1f"  textLength="46.34" lengthAdjust="spacingAndGlyphs"  stroke="#1f1f1f" stroke-width="0.22">Format</text>
<path d="M1323.2 150.4 L1326.9 154.4 L1330.6 150.4" stroke="#333" fill="none" stroke-width="1.5" />
<line x1="1349.50" y1="87.60" x2="1349.50" y2="167.50" stroke="#cdcdcd" stroke-width="1" />
<path d="M1384.6 87.0 L1369.6 87.0 L1377.6 95.2 L1369.6 103.4 L1384.6 103.4" stroke="#3a3a3a" fill="none" stroke-width="1.4" stroke-linejoin="round"/>
<path d="M1395.0 93.6 L1398.6 97.6 L1402.2 93.6" stroke="#333" fill="none" stroke-width="1.5" />
<rect x="1366.40" y="115.40" width="20.40" height="17.40" fill="#ffffff" stroke="#3a3a3a" stroke-width="1.3" />
<line x1="1366.40" y1="118.60" x2="1386.80" y2="118.60" stroke="#3a3a3a" stroke-width="1.2" />
<path d="M1376.6 121.6 L1376.6 129.6 M1373.4 126.4 L1376.6 129.6 L1379.8 126.4" stroke="#1f86d6" fill="none" stroke-width="1.4" />
<path d="M1395.0 121.6 L1398.6 125.6 L1402.2 121.6" stroke="#333" fill="none" stroke-width="1.5" />
<path d="M1367.2 155.0 L1378.6 143.2 L1385.8 150.4 L1374.4 162.2 Z" stroke="#9b30b5" fill="#ffffff" stroke-width="1.4" stroke-linejoin="round"/>
<path d="M1367.2 155.0 L1371.4 150.6 L1378.6 157.8 L1374.4 162.2 Z" stroke="#9b30b5" fill="#c77fdb" stroke-width="1.2" />
<path d="M1395.0 150.4 L1398.6 154.4 L1402.2 150.4" stroke="#333" fill="none" stroke-width="1.5" />
<text x="1414.60" y="104.00" font-size="19.6" fill="#1f86d6"  textLength="12.87" lengthAdjust="spacingAndGlyphs"  stroke="#1f86d6" stroke-width="0.22">A</text>
<path d="M1414.6 107.8 L1425.6 107.8 L1414.8 121.8 L1425.8 121.8" stroke="#3a3a3a" fill="none" stroke-width="1.4" />
<path d="M1430.4 97.2 L1446 97.2 M1430.4 97.2 L1437.8 105.8 L1437.8 116.2 L1442.6 116.2 L1442.6 105.8 L1446 101.8" stroke="#3a3a3a" fill="none" stroke-width="1.4" stroke-linejoin="round"/>
<text x="1419.30" y="144.80" font-size="13.4" fill="#1f1f1f"   stroke="#1f1f1f" stroke-width="0.22">Sort &amp;</text>
<text x="1422.90" y="160.00" font-size="13.4" fill="#1f1f1f"   stroke="#1f1f1f" stroke-width="0.22">Filter</text>
<line x1="0.00" y1="172.40" x2="1445.00" y2="172.40" stroke="#d9d9d9" stroke-width="1" />
<defs><linearGradient id="nb" x1="0" y1="0" x2="0" y2="1"><stop offset="0" stop-color="#fdf6e2"/><stop offset="1" stop-color="#f9eed5"/></linearGradient></defs>
<rect x="0.00" y="172.90" width="1445.00" height="39.90" fill="url(#nb)" />
<line x1="0.00" y1="212.60" x2="1445.00" y2="212.60" stroke="#d6ccb4" stroke-width="1.1" />
<text x="22.22" y="199.30" font-size="16.2" fill="#1e1e1e" font-weight="bold" textLength="214.24" lengthAdjust="spacingAndGlyphs" >Open recovered workbooks?</text>
<text x="248.79" y="199.30" font-size="16.2" fill="#2c2c2c"  textLength="630.23" lengthAdjust="spacingAndGlyphs"  stroke="#2c2c2c" stroke-width="0.22">Your recent changes were saved. Do you want to continue working where you left off?</text>
<rect x="0.00" y="213.10" width="1445.00" height="33.90" fill="#ffffff" />
<line x1="90.40" y1="213.10" x2="90.40" y2="247.00" stroke="#d5d5d5" stroke-width="1" />
<text x="-6.53" y="235.90" font-size="16.0" fill="#222222"  textLength="18.59" lengthAdjust="spacingAndGlyphs"  stroke="#222222" stroke-width="0.22">A1</text>
<path d="M80.4 225.8 L84.7 219.3 L89.0 225.8 Z" stroke="none" fill="#6e6e6e" stroke-width="1" />
<path d="M80.4 234.0 L84.7 240.9 L89.0 234.0 Z" stroke="none" fill="#6e6e6e" stroke-width="1" />
<path d="M111.6 226.6 L124.0 239.0 M124.0 226.6 L111.6 239.0" stroke="#c0c0c0" fill="none" stroke-width="1.9" />
<path d="M147.8 232.6 L153.6 238.6 L164.8 226.8" stroke="#c0c0c0" fill="none" stroke-width="1.9" />
<text x="178.24" y="238.00" font-size="19.0" fill="#3c3c3c" font-style="italic" font-family="Liberation Serif" textLength="18.14" lengthAdjust="spacingAndGlyphs"  stroke="#3c3c3c" stroke-width="0.22">fx</text>
<path d="M204.6 230.6 L208.1 234.4 L211.6 230.6" stroke="#bdbdbd" fill="none" stroke-width="1.2" />
<rect x="216.40" y="217.60" width="1228.60" height="27.00" fill="#ffffff" />
<line x1="216.60" y1="217.60" x2="216.60" y2="244.60" stroke="#e1e1e1" stroke-width="1" />
<line x1="216.60" y1="217.40" x2="1445.00" y2="217.40" stroke="#ececec" stroke-width="1" />
<line x1="216.60" y1="244.60" x2="1445.00" y2="244.60" stroke="#ececec" stroke-width="1" />
<text x="225.01" y="236.60" font-size="16.2" fill="#1a1a1a"  textLength="704.28" lengthAdjust="spacingAndGlyphs"  stroke="#1a1a1a" stroke-width="0.22">Pricing &amp; Profitability Simulator v3.0 — Decision Kits  |  Up to 5 Products  ·  3 Scenarios  |  USD ($)</text>
<rect x="10.00" y="251.00" width="1435.00" height="729.00" fill="#ffffff" />
<line x1="244.40" y1="278.00" x2="244.40" y2="980.00" stroke="#d0d0d0" stroke-width="1" />
<line x1="353.30" y1="278.00" x2="353.30" y2="980.00" stroke="#d0d0d0" stroke-width="1" />
<line x1="462.90" y1="278.00" x2="462.90" y2="980.00" stroke="#d0d0d0" stroke-width="1" />
<line x1="572.50" y1="278.00" x2="572.50" y2="980.00" stroke="#d0d0d0" stroke-width="1" />
<line x1="674.60" y1="278.00" x2="674.60" y2="980.00" stroke="#d0d0d0" stroke-width="1" />
<line x1="769.30" y1="278.00" x2="769.30" y2="980.00" stroke="#d0d0d0" stroke-width="1" />
<line x1="847.70" y1="278.00" x2="847.70" y2="980.00" stroke="#d0d0d0" stroke-width="1" />
<line x1="957.30" y1="278.00" x2="957.30" y2="980.00" stroke="#d0d0d0" stroke-width="1" />
<line x1="1050.70" y1="278.00" x2="1050.70" y2="980.00" stroke="#d0d0d0" stroke-width="1" />
<line x1="1160.30" y1="278.00" x2="1160.30" y2="980.00" stroke="#d0d0d0" stroke-width="1" />
<line x1="1285.60" y1="278.00" x2="1285.60" y2="980.00" stroke="#d0d0d0" stroke-width="1" />
<line x1="1410.20" y1="278.00" x2="1410.20" y2="980.00" stroke="#d0d0d0" stroke-width="1" />
<line x1="1545.00" y1="278.00" x2="1545.00" y2="980.00" stroke="#d0d0d0" stroke-width="1" />
<line x1="10.00" y1="307.00" x2="1445.00" y2="307.00" stroke="#d0d0d0" stroke-width="1" />
<line x1="10.00" y1="324.20" x2="1445.00" y2="324.20" stroke="#d0d0d0" stroke-width="1" />
<line x1="10.00" y1="343.30" x2="1445.00" y2="343.30" stroke="#d0d0d0" stroke-width="1" />
<line x1="10.00" y1="362.80" x2="1445.00" y2="362.80" stroke="#d0d0d0" stroke-width="1" />
<line x1="10.00" y1="386.80" x2="1445.00" y2="386.80" stroke="#d0d0d0" stroke-width="1" />
<line x1="10.00" y1="405.40" x2="1445.00" y2="405.40" stroke="#d0d0d0" stroke-width="1" />
<line x1="10.00" y1="432.60" x2="1445.00" y2="432.60" stroke="#d0d0d0" stroke-width="1" />
<line x1="10.00" y1="452.30" x2="1445.00" y2="452.30" stroke="#d0d0d0" stroke-width="1" />
<line x1="10.00" y1="471.90" x2="1445.00" y2="471.90" stroke="#d0d0d0" stroke-width="1" />
<line x1="10.00" y1="491.50" x2="1445.00" y2="491.50" stroke="#d0d0d0" stroke-width="1" />
<line x1="10.00" y1="511.10" x2="1445.00" y2="511.10" stroke="#d0d0d0" stroke-width="1" />
<line x1="10.00" y1="535.10" x2="1445.00" y2="535.10" stroke="#d0d0d0" stroke-width="1" />
<line x1="10.00" y1="554.80" x2="1445.00" y2="554.80" stroke="#d0d0d0" stroke-width="1" />
<line x1="10.00" y1="574.40" x2="1445.00" y2="574.40" stroke="#d0d0d0" stroke-width="1" />
<line x1="10.00" y1="594.00" x2="1445.00" y2="594.00" stroke="#d0d0d0" stroke-width="1" />
<line x1="10.00" y1="613.50" x2="1445.00" y2="613.50" stroke="#d0d0d0" stroke-width="1" />
<line x1="10.00" y1="633.00" x2="1445.00" y2="633.00" stroke="#d0d0d0" stroke-width="1" />
<line x1="10.00" y1="652.30" x2="1445.00" y2="652.30" stroke="#d0d0d0" stroke-width="1" />
<line x1="10.00" y1="671.40" x2="1445.00" y2="671.40" stroke="#d0d0d0" stroke-width="1" />
<line x1="10.00" y1="691.20" x2="1445.00" y2="691.20" stroke="#d0d0d0" stroke-width="1" />
<line x1="10.00" y1="710.60" x2="1445.00" y2="710.60" stroke="#d0d0d0" stroke-width="1" />
<line x1="10.00" y1="733.70" x2="1445.00" y2="733.70" stroke="#d0d0d0" stroke-width="1" />
<line x1="10.00" y1="780.60" x2="1445.00" y2="780.60" stroke="#d0d0d0" stroke-width="1" />
<line x1="10.00" y1="804.20" x2="1445.00" y2="804.20" stroke="#d0d0d0" stroke-width="1" />
<line x1="10.00" y1="827.90" x2="1445.00" y2="827.90" stroke="#d0d0d0" stroke-width="1" />
<line x1="10.00" y1="851.30" x2="1445.00" y2="851.30" stroke="#d0d0d0" stroke-width="1" />
<line x1="10.00" y1="874.80" x2="1445.00" y2="874.80" stroke="#d0d0d0" stroke-width="1" />
<line x1="10.00" y1="898.20" x2="1445.00" y2="898.20" stroke="#d0d0d0" stroke-width="1" />
<line x1="10.00" y1="917.40" x2="1445.00" y2="917.40" stroke="#d0d0d0" stroke-width="1" />
<line x1="10.00" y1="937.10" x2="1445.00" y2="937.10" stroke="#d0d0d0" stroke-width="1" />
<line x1="10.00" y1="956.70" x2="1445.00" y2="956.70" stroke="#d0d0d0" stroke-width="1" />
<line x1="10.00" y1="976.40" x2="1445.00" y2="976.40" stroke="#d0d0d0" stroke-width="1" />
<line x1="10.00" y1="996.00" x2="1445.00" y2="996.00" stroke="#d0d0d0" stroke-width="1" />
<rect x="10.50" y="324.70" width="1399.20" height="18.10" fill="#ffffff" />
<rect x="353.80" y="387.30" width="218.20" height="17.60" fill="#ffffff" />
<rect x="10.00" y="278.80" width="1400.70" height="45.90" fill="#1f4e79" />
<rect x="10.00" y="362.30" width="1400.70" height="25.00" fill="#2e75b6" />
<rect x="243.90" y="386.30" width="109.90" height="19.60" fill="#fff2cc" />
<rect x="10.00" y="404.90" width="563.00" height="28.20" fill="#1f4e79" />
<rect x="10.00" y="432.10" width="563.00" height="20.70" fill="#d3e2f4" />
<rect x="10.00" y="451.80" width="563.00" height="20.60" fill="#fff2cc" />
<rect x="10.00" y="471.40" width="563.00" height="20.60" fill="#e8f5eb" />
<rect x="768.80" y="432.10" width="79.40" height="59.90" fill="#fff4a3" />
<rect x="10.00" y="510.60" width="1400.70" height="25.00" fill="#2e75b6" />
<rect x="243.90" y="534.60" width="109.90" height="98.90" fill="#d3e2f4" />
<rect x="10.00" y="651.80" width="343.80" height="20.10" fill="#d9ead3" />
<rect x="10.00" y="670.90" width="343.80" height="20.80" fill="#fff4a3" />
<rect x="10.00" y="710.10" width="1400.70" height="24.10" fill="#2e75b6" />
<rect x="10.00" y="733.20" width="1400.70" height="47.90" fill="#1f4e79" />
<rect x="10.00" y="780.10" width="665.10" height="118.60" fill="#d3e2f4" />
<rect x="674.10" y="780.10" width="612.00" height="118.60" fill="#fff4a3" />
<rect x="1285.10" y="780.10" width="125.60" height="118.60" fill="#d9ead3" />
<rect x="10.00" y="897.70" width="234.90" height="20.20" fill="#1f4e79" />
<rect x="1050.20" y="897.70" width="360.50" height="20.20" fill="#d9ead3" />
<rect x="10.00" y="916.90" width="234.90" height="40.30" fill="#d9ead3" />
<rect x="1050.20" y="916.90" width="110.60" height="40.30" fill="#d9ead3" />
<rect x="10.00" y="956.20" width="234.90" height="20.70" fill="#fff4a3" />
<rect x="1050.20" y="956.20" width="110.60" height="20.70" fill="#fff4a3" />
<rect x="0.00" y="246.80" width="1445.00" height="6.20" fill="#ffffff" />
<rect x="0.00" y="246.70" width="90.40" height="1.90" fill="#b6b6b6" />
<rect x="90.40" y="247.30" width="1354.60" height="1.50" fill="#b9b9b9" />
<rect x="0.00" y="249.90" width="1445.00" height="1.90" fill="#b9b9b9" />
<rect x="0.00" y="252.90" width="1445.00" height="24.10" fill="#f1f1f1" />
<rect x="1410.40" y="252.90" width="34.60" height="25.70" fill="#f8f8f8" />
<line x1="0.00" y1="276.70" x2="1410.40" y2="276.70" stroke="#ffffff" stroke-width="1.2" />
<rect x="0.00" y="252.90" width="9.40" height="727.10" fill="#f2f2f2" />
<line x1="9.40" y1="252.00" x2="9.40" y2="980.00" stroke="#c4c4c4" stroke-width="1.1" />
<rect x="0.00" y="252.90" width="9.00" height="24.70" fill="#f3f3f3" />
<path d="M0 263.0 L6.1 256.8 L6.1 275.4 L0 275.4 Z" stroke="none" fill="#dcdcdc" stroke-width="1" />
<rect x="6.10" y="254.00" width="2.50" height="23.40" fill="#fafafa" />
<rect x="0.00" y="275.40" width="8.60" height="2.00" fill="#fafafa" />
<line x1="244.40" y1="251.50" x2="244.40" y2="277.00" stroke="#dcdcdc" stroke-width="1" />
<line x1="353.30" y1="251.50" x2="353.30" y2="277.00" stroke="#dcdcdc" stroke-width="1" />
<line x1="462.90" y1="251.50" x2="462.90" y2="277.00" stroke="#dcdcdc" stroke-width="1" />
<line x1="572.50" y1="251.50" x2="572.50" y2="277.00" stroke="#dcdcdc" stroke-width="1" />
<line x1="674.60" y1="251.50" x2="674.60" y2="277.00" stroke="#dcdcdc" stroke-width="1" />
<line x1="769.30" y1="251.50" x2="769.30" y2="277.00" stroke="#dcdcdc" stroke-width="1" />
<line x1="847.70" y1="251.50" x2="847.70" y2="277.00" stroke="#dcdcdc" stroke-width="1" />
<line x1="957.30" y1="251.50" x2="957.30" y2="277.00" stroke="#dcdcdc" stroke-width="1" />
<line x1="1050.70" y1="251.50" x2="1050.70" y2="277.00" stroke="#dcdcdc" stroke-width="1" />
<line x1="1160.30" y1="251.50" x2="1160.30" y2="277.00" stroke="#dcdcdc" stroke-width="1" />
<line x1="1285.60" y1="251.50" x2="1285.60" y2="277.00" stroke="#dcdcdc" stroke-width="1" />
<line x1="1410.20" y1="251.50" x2="1410.20" y2="277.00" stroke="#dcdcdc" stroke-width="1" />
<line x1="1411.50" y1="279.20" x2="1445.00" y2="279.20" stroke="#b9b9b9" stroke-width="1.4" />
<text x="122.88" y="269.90" font-size="13.6" fill="#1e6e3e"  textLength="8.62" lengthAdjust="spacingAndGlyphs"  stroke="#1e6e3e" stroke-width="0.25">A</text>
<text x="294.34" y="269.90" font-size="13.6" fill="#1e6e3e"  textLength="8.62" lengthAdjust="spacingAndGlyphs"  stroke="#1e6e3e" stroke-width="0.25">B</text>
<text x="403.35" y="269.90" font-size="13.6" fill="#1e6e3e"  textLength="9.33" lengthAdjust="spacingAndGlyphs"  stroke="#1e6e3e" stroke-width="0.25">C</text>
<text x="512.81" y="269.90" font-size="13.6" fill="#1e6e3e"  textLength="9.33" lengthAdjust="spacingAndGlyphs"  stroke="#1e6e3e" stroke-width="0.25">D</text>
<text x="618.99" y="269.90" font-size="13.6" fill="#1e6e3e"  textLength="8.62" lengthAdjust="spacingAndGlyphs"  stroke="#1e6e3e" stroke-width="0.25">E</text>
<text x="717.72" y="269.90" font-size="13.6" fill="#1e6e3e"  textLength="7.89" lengthAdjust="spacingAndGlyphs"  stroke="#1e6e3e" stroke-width="0.25">F</text>
<text x="803.65" y="269.90" font-size="13.6" fill="#1e6e3e"  textLength="10.05" lengthAdjust="spacingAndGlyphs"  stroke="#1e6e3e" stroke-width="0.25">G</text>
<text x="897.80" y="269.90" font-size="13.6" fill="#1e6e3e"  textLength="9.33" lengthAdjust="spacingAndGlyphs"  stroke="#1e6e3e" stroke-width="0.25">H</text>
<text x="1002.20" y="269.90" font-size="13.6" fill="#1e6e3e"  textLength="3.59" lengthAdjust="spacingAndGlyphs"  stroke="#1e6e3e" stroke-width="0.25">I</text>
<text x="1102.65" y="269.90" font-size="13.6" fill="#1e6e3e"  textLength="6.46" lengthAdjust="spacingAndGlyphs"  stroke="#1e6e3e" stroke-width="0.25">J</text>
<text x="1218.15" y="269.90" font-size="13.6" fill="#1e6e3e"  textLength="8.62" lengthAdjust="spacingAndGlyphs"  stroke="#1e6e3e" stroke-width="0.25">K</text>
<text x="1343.96" y="269.90" font-size="13.6" fill="#1e6e3e"  textLength="7.19" lengthAdjust="spacingAndGlyphs"  stroke="#1e6e3e" stroke-width="0.25">L</text>
<text x="1438.36" y="269.80" font-size="13.6" fill="#333333"  textLength="10.76" lengthAdjust="spacingAndGlyphs"  stroke="#333333" stroke-width="0.05">M</text>
<text x="-11.03" y="486.90" font-size="12.6" fill="#3a3a3a"  textLength="13.31" lengthAdjust="spacingAndGlyphs"  stroke="#3a3a3a" stroke-width="0.2">10</text>
<text x="-9.95" y="506.50" font-size="12.6" fill="#3a3a3a"  textLength="12.43" lengthAdjust="spacingAndGlyphs"  stroke="#3a3a3a" stroke-width="0.2">11</text>
<text x="-10.84" y="530.50" font-size="12.6" fill="#3a3a3a"  textLength="13.31" lengthAdjust="spacingAndGlyphs"  stroke="#3a3a3a" stroke-width="0.2">12</text>
<text x="-10.93" y="550.20" font-size="12.6" fill="#3a3a3a"  textLength="13.31" lengthAdjust="spacingAndGlyphs"  stroke="#3a3a3a" stroke-width="0.2">13</text>
<text x="-11.12" y="569.80" font-size="12.6" fill="#3a3a3a"  textLength="13.31" lengthAdjust="spacingAndGlyphs"  stroke="#3a3a3a" stroke-width="0.2">14</text>
<text x="-10.93" y="589.40" font-size="12.6" fill="#3a3a3a"  textLength="13.31" lengthAdjust="spacingAndGlyphs"  stroke="#3a3a3a" stroke-width="0.2">15</text>
<text x="-10.93" y="608.90" font-size="12.6" fill="#3a3a3a"  textLength="13.31" lengthAdjust="spacingAndGlyphs"  stroke="#3a3a3a" stroke-width="0.2">16</text>
<text x="-10.84" y="628.40" font-size="12.6" fill="#3a3a3a"  textLength="13.31" lengthAdjust="spacingAndGlyphs"  stroke="#3a3a3a" stroke-width="0.2">17</text>
<text x="-10.93" y="647.70" font-size="12.6" fill="#3a3a3a"  textLength="13.31" lengthAdjust="spacingAndGlyphs"  stroke="#3a3a3a" stroke-width="0.2">18</text>
<text x="-10.93" y="666.80" font-size="12.6" fill="#3a3a3a"  textLength="13.31" lengthAdjust="spacingAndGlyphs"  stroke="#3a3a3a" stroke-width="0.2">19</text>
<text x="-11.03" y="686.60" font-size="12.6" fill="#3a3a3a"  textLength="13.31" lengthAdjust="spacingAndGlyphs"  stroke="#3a3a3a" stroke-width="0.2">20</text>
<text x="-10.84" y="706.00" font-size="12.6" fill="#3a3a3a"  textLength="13.31" lengthAdjust="spacingAndGlyphs"  stroke="#3a3a3a" stroke-width="0.2">21</text>
<text x="-10.84" y="729.10" font-size="12.6" fill="#3a3a3a"  textLength="13.31" lengthAdjust="spacingAndGlyphs"  stroke="#3a3a3a" stroke-width="0.2">22</text>
<text x="-10.93" y="776.00" font-size="12.6" fill="#3a3a3a"  textLength="13.31" lengthAdjust="spacingAndGlyphs"  stroke="#3a3a3a" stroke-width="0.2">23</text>
<text x="-11.12" y="799.60" font-size="12.6" fill="#3a3a3a"  textLength="13.31" lengthAdjust="spacingAndGlyphs"  stroke="#3a3a3a" stroke-width="0.2">24</text>
<text x="-10.93" y="823.30" font-size="12.6" fill="#3a3a3a"  textLength="13.31" lengthAdjust="spacingAndGlyphs"  stroke="#3a3a3a" stroke-width="0.2">25</text>
<text x="-10.93" y="846.70" font-size="12.6" fill="#3a3a3a"  textLength="13.31" lengthAdjust="spacingAndGlyphs"  stroke="#3a3a3a" stroke-width="0.2">26</text>
<text x="-10.84" y="870.20" font-size="12.6" fill="#3a3a3a"  textLength="13.31" lengthAdjust="spacingAndGlyphs"  stroke="#3a3a3a" stroke-width="0.2">27</text>
<text x="-10.93" y="893.60" font-size="12.6" fill="#3a3a3a"  textLength="13.31" lengthAdjust="spacingAndGlyphs"  stroke="#3a3a3a" stroke-width="0.2">28</text>
<text x="-10.93" y="912.80" font-size="12.6" fill="#3a3a3a"  textLength="13.31" lengthAdjust="spacingAndGlyphs"  stroke="#3a3a3a" stroke-width="0.2">29</text>
<text x="-11.03" y="932.50" font-size="12.6" fill="#3a3a3a"  textLength="13.31" lengthAdjust="spacingAndGlyphs"  stroke="#3a3a3a" stroke-width="0.2">30</text>
<text x="-10.84" y="952.10" font-size="12.6" fill="#3a3a3a"  textLength="13.31" lengthAdjust="spacingAndGlyphs"  stroke="#3a3a3a" stroke-width="0.2">31</text>
<text x="-10.84" y="971.80" font-size="12.6" fill="#3a3a3a"  textLength="13.31" lengthAdjust="spacingAndGlyphs"  stroke="#3a3a3a" stroke-width="0.2">32</text>
<line x1="0.00" y1="307.00" x2="9.40" y2="307.00" stroke="#dadada" stroke-width="1" />
<line x1="0.00" y1="324.20" x2="9.40" y2="324.20" stroke="#dadada" stroke-width="1" />
<line x1="0.00" y1="343.30" x2="9.40" y2="343.30" stroke="#dadada" stroke-width="1" />
<line x1="0.00" y1="362.80" x2="9.40" y2="362.80" stroke="#dadada" stroke-width="1" />
<line x1="0.00" y1="386.80" x2="9.40" y2="386.80" stroke="#dadada" stroke-width="1" />
<line x1="0.00" y1="405.40" x2="9.40" y2="405.40" stroke="#dadada" stroke-width="1" />
<line x1="0.00" y1="432.60" x2="9.40" y2="432.60" stroke="#dadada" stroke-width="1" />
<line x1="0.00" y1="452.30" x2="9.40" y2="452.30" stroke="#dadada" stroke-width="1" />
<line x1="0.00" y1="471.90" x2="9.40" y2="471.90" stroke="#dadada" stroke-width="1" />
<line x1="0.00" y1="491.50" x2="9.40" y2="491.50" stroke="#dadada" stroke-width="1" />
<line x1="0.00" y1="511.10" x2="9.40" y2="511.10" stroke="#dadada" stroke-width="1" />
<line x1="0.00" y1="535.10" x2="9.40" y2="535.10" stroke="#dadada" stroke-width="1" />
<line x1="0.00" y1="554.80" x2="9.40" y2="554.80" stroke="#dadada" stroke-width="1" />
<line x1="0.00" y1="574.40" x2="9.40" y2="574.40" stroke="#dadada" stroke-width="1" />
<line x1="0.00" y1="594.00" x2="9.40" y2="594.00" stroke="#dadada" stroke-width="1" />
<line x1="0.00" y1="613.50" x2="9.40" y2="613.50" stroke="#dadada" stroke-width="1" />
<line x1="0.00" y1="633.00" x2="9.40" y2="633.00" stroke="#dadada" stroke-width="1" />
<line x1="0.00" y1="652.30" x2="9.40" y2="652.30" stroke="#dadada" stroke-width="1" />
<line x1="0.00" y1="671.40" x2="9.40" y2="671.40" stroke="#dadada" stroke-width="1" />
<line x1="0.00" y1="691.20" x2="9.40" y2="691.20" stroke="#dadada" stroke-width="1" />
<line x1="0.00" y1="710.60" x2="9.40" y2="710.60" stroke="#dadada" stroke-width="1" />
<line x1="0.00" y1="733.70" x2="9.40" y2="733.70" stroke="#dadada" stroke-width="1" />
<line x1="0.00" y1="780.60" x2="9.40" y2="780.60" stroke="#dadada" stroke-width="1" />
<line x1="0.00" y1="804.20" x2="9.40" y2="804.20" stroke="#dadada" stroke-width="1" />
<line x1="0.00" y1="827.90" x2="9.40" y2="827.90" stroke="#dadada" stroke-width="1" />
<line x1="0.00" y1="851.30" x2="9.40" y2="851.30" stroke="#dadada" stroke-width="1" />
<line x1="0.00" y1="874.80" x2="9.40" y2="874.80" stroke="#dadada" stroke-width="1" />
<line x1="0.00" y1="898.20" x2="9.40" y2="898.20" stroke="#dadada" stroke-width="1" />
<line x1="0.00" y1="917.40" x2="9.40" y2="917.40" stroke="#dadada" stroke-width="1" />
<line x1="0.00" y1="937.10" x2="9.40" y2="937.10" stroke="#dadada" stroke-width="1" />
<line x1="0.00" y1="956.70" x2="9.40" y2="956.70" stroke="#dadada" stroke-width="1" />
<line x1="0.00" y1="976.40" x2="9.40" y2="976.40" stroke="#dadada" stroke-width="1" />
<line x1="0.00" y1="996.00" x2="9.40" y2="996.00" stroke="#dadada" stroke-width="1" />
<text x="391.35" y="302.20" font-size="14.4" fill="#ffffff" font-weight="bold" textLength="635.91" lengthAdjust="spacingAndGlyphs"  stroke="#ffffff" stroke-width="0.28">Pricing &amp; Profitability Simulator v3.0 — Decision Kits  |  Up to 5 Products  ·  3 Scenarios  |  USD ($)</text>
<circle cx="482.6" cy="314.4" r="5.3" fill="#1260d8"/>
<circle cx="481.40000000000003" cy="312.79999999999995" r="3.2" fill="#9fd0ff" opacity="0.55"/>
<circle cx="567.3" cy="314.4" r="5.3" fill="#f6c500"/>
<circle cx="566.0999999999999" cy="312.79999999999995" r="3.2" fill="#fff6a0" opacity="0.55"/>
<circle cx="684.7" cy="314.4" r="5.3" fill="#22a51c"/>
<circle cx="683.5" cy="312.79999999999995" r="3.2" fill="#b8f5a0" opacity="0.55"/>
<text x="490.50" y="319.20" font-size="10.8" fill="#ffffff"  textLength="57.70" lengthAdjust="spacingAndGlyphs"  stroke="#ffffff" stroke-width="0.32">Blue = Input</text>
<text x="554.20" y="319.20" font-size="10.8" fill="#ffffff"   stroke="#ffffff" stroke-width="0.32">·</text>
<text x="575.61" y="319.20" font-size="10.8" fill="#ffffff"  textLength="89.67" lengthAdjust="spacingAndGlyphs"  stroke="#ffffff" stroke-width="0.32">Yellow = Calculated</text>
<text x="671.20" y="319.20" font-size="10.8" fill="#ffffff"   stroke="#ffffff" stroke-width="0.32">·</text>
<text x="693.11" y="319.20" font-size="10.8" fill="#ffffff"  textLength="73.89" lengthAdjust="spacingAndGlyphs"  stroke="#ffffff" stroke-width="0.32">Green = Output</text>
<text x="772.80" y="319.20" font-size="10.8" fill="#ffffff"   stroke="#ffffff" stroke-width="0.32">·</text>
<text x="780.01" y="319.20" font-size="10.8" fill="#ffffff"  textLength="151.99" lengthAdjust="spacingAndGlyphs"  stroke="#ffffff" stroke-width="0.32">Do not edit yellow or green cells</text>
<text x="13.20" y="339.10" font-size="11.0" fill="#595959" font-style="italic" textLength="560.05" lengthAdjust="spacingAndGlyphs"  stroke="#595959" stroke-width="0.15">Enter blue cells. Scenario applies price and volume multipliers. All margins and break-evens calculate automatically.</text>
<text x="18.52" y="381.90" font-size="12.0" fill="#ffffff" font-weight="bold" textLength="137.88" lengthAdjust="spacingAndGlyphs"  stroke="#ffffff" stroke-width="0.28">A — SCENARIO CONTROL</text>
<text x="13.50" y="401.40" font-size="13.2" fill="#0c0c0c"  textLength="220.17" lengthAdjust="spacingAndGlyphs"  stroke="#0c0c0c" stroke-width="0.32">Active Scenario (Lean / Base / Growth)</text>
<text x="247.53" y="401.40" font-size="13.2" fill="#0c0c0c" font-weight="bold" textLength="26.44" lengthAdjust="spacingAndGlyphs"  stroke="#0c0c0c" stroke-width="0.28">Base</text>
<path d="M358.6 397.6 L366.8 397.6 M362.4 393.8 L358.6 397.6 L362.4 401.4" stroke="#595959" fill="none" stroke-width="1.0" />
<text x="370.04" y="400.90" font-size="11.0" fill="#595959" font-style="italic" textLength="131.16" lengthAdjust="spacingAndGlyphs"  stroke="#595959" stroke-width="0.12">Type Lean, Base, or Growth</text>
<clipPath id="r7"><rect x="10" y="405.4" width="1400" height="27.200000000000045"/></clipPath>
<text x="385.90" y="409.10" font-size="13.2" fill="#ffffff" font-weight="bold" textLength="46.34" lengthAdjust="spacingAndGlyphs" clip-path="url(#r7)" stroke="#ffffff" stroke-width="0.28">Volume</text>
<text x="100.02" y="428.60" font-size="13.2" fill="#ffffff" font-weight="bold" textLength="52.62" lengthAdjust="spacingAndGlyphs"  stroke="#ffffff" stroke-width="0.28">Scenario</text>
<text x="249.78" y="428.70" font-size="13.2" fill="#ffffff" font-weight="bold" textLength="96.96" lengthAdjust="spacingAndGlyphs"  stroke="#ffffff" stroke-width="0.28">Price Multiplier</text>
<text x="376.14" y="428.70" font-size="13.2" fill="#ffffff" font-weight="bold" textLength="62.80" lengthAdjust="spacingAndGlyphs"  stroke="#ffffff" stroke-width="0.28">Multiplier</text>
<text x="471.30" y="428.70" font-size="13.2" fill="#ffffff" font-weight="bold" textLength="91.23" lengthAdjust="spacingAndGlyphs"  stroke="#ffffff" stroke-width="0.28">Cost Multiplier</text>
<text x="12.73" y="448.10" font-size="13.2" fill="#0c0c0c" font-weight="bold" textLength="29.58" lengthAdjust="spacingAndGlyphs"  stroke="#0c0c0c" stroke-width="0.28">Lean</text>
<text x="310.86" y="448.10" font-size="13.2" fill="#0c0c0c"  textLength="39.30" lengthAdjust="spacingAndGlyphs"  stroke="#0c0c0c" stroke-width="0.32">93,0%</text>
<text x="420.46" y="448.10" font-size="13.2" fill="#0c0c0c"  textLength="39.30" lengthAdjust="spacingAndGlyphs"  stroke="#0c0c0c" stroke-width="0.32">80,0%</text>
<text x="530.06" y="448.10" font-size="13.2" fill="#0c0c0c"  textLength="39.30" lengthAdjust="spacingAndGlyphs"  stroke="#0c0c0c" stroke-width="0.32">95,0%</text>
<text x="12.73" y="467.70" font-size="13.2" fill="#0c0c0c" font-weight="bold" textLength="30.29" lengthAdjust="spacingAndGlyphs"  stroke="#0c0c0c" stroke-width="0.28">Base</text>
<text x="303.15" y="467.70" font-size="13.2" fill="#0c0c0c"  textLength="47.01" lengthAdjust="spacingAndGlyphs"  stroke="#0c0c0c" stroke-width="0.32">100,0%</text>
<text x="412.75" y="467.70" font-size="13.2" fill="#0c0c0c"  textLength="47.01" lengthAdjust="spacingAndGlyphs"  stroke="#0c0c0c" stroke-width="0.32">100,0%</text>
<text x="522.35" y="467.70" font-size="13.2" fill="#0c0c0c"  textLength="47.01" lengthAdjust="spacingAndGlyphs"  stroke="#0c0c0c" stroke-width="0.32">100,0%</text>
<text x="13.02" y="487.30" font-size="13.2" fill="#0c0c0c" font-weight="bold" textLength="44.35" lengthAdjust="spacingAndGlyphs"  stroke="#0c0c0c" stroke-width="0.28">Growth</text>
<text x="303.15" y="487.30" font-size="13.2" fill="#0c0c0c"  textLength="47.01" lengthAdjust="spacingAndGlyphs"  stroke="#0c0c0c" stroke-width="0.32">107,0%</text>
<text x="412.75" y="487.30" font-size="13.2" fill="#0c0c0c"  textLength="47.01" lengthAdjust="spacingAndGlyphs"  stroke="#0c0c0c" stroke-width="0.32">120,0%</text>
<text x="522.35" y="487.30" font-size="13.2" fill="#0c0c0c"  textLength="47.01" lengthAdjust="spacingAndGlyphs"  stroke="#0c0c0c" stroke-width="0.32">105,0%</text>
<text x="677.99" y="448.20" font-size="11.0" fill="#595959" font-style="italic" textLength="83.36" lengthAdjust="spacingAndGlyphs"  stroke="#595959" stroke-width="0.12">Active Price Mult:</text>
<text x="798.48" y="448.20" font-size="13.2" fill="#0c0c0c"  textLength="45.77" lengthAdjust="spacingAndGlyphs"  stroke="#0c0c0c" stroke-width="0.32">100,0%</text>
<text x="678.00" y="467.80" font-size="11.0" fill="#595959" font-style="italic"  stroke="#595959" stroke-width="0.12">Active Vol Mult:</text>
<text x="798.48" y="467.80" font-size="13.2" fill="#0c0c0c"  textLength="45.77" lengthAdjust="spacingAndGlyphs"  stroke="#0c0c0c" stroke-width="0.32">100,0%</text>
<text x="678.00" y="487.40" font-size="11.0" fill="#595959" font-style="italic"  stroke="#595959" stroke-width="0.12">Active Cost Mult:</text>
<text x="798.48" y="487.40" font-size="13.2" fill="#0c0c0c"  textLength="45.77" lengthAdjust="spacingAndGlyphs"  stroke="#0c0c0c" stroke-width="0.32">100,0%</text>
<text x="17.97" y="530.40" font-size="12.0" fill="#ffffff" font-weight="bold" textLength="244.17" lengthAdjust="spacingAndGlyphs"  stroke="#ffffff" stroke-width="0.28">B — MONTHLY FIXED COSTS  (enter each line)</text>
<text x="12.01" y="550.40" font-size="13.2" fill="#0c0c0c"  textLength="103.13" lengthAdjust="spacingAndGlyphs"  stroke="#0c0c0c" stroke-width="0.32">Payroll &amp; Salaries</text>
<text x="308.07" y="550.40" font-size="13.2" fill="#1a6ec1"  textLength="42.39" lengthAdjust="spacingAndGlyphs"  stroke="#1a6ec1" stroke-width="0.32">$8.000</text>
<text x="12.01" y="570.00" font-size="13.2" fill="#0c0c0c"  textLength="94.41" lengthAdjust="spacingAndGlyphs"  stroke="#0c0c0c" stroke-width="0.32">Rent &amp; Facilities</text>
<text x="308.07" y="570.00" font-size="13.2" fill="#1a6ec1"  textLength="42.39" lengthAdjust="spacingAndGlyphs"  stroke="#1a6ec1" stroke-width="0.32">$2.000</text>
<text x="12.41" y="589.60" font-size="13.2" fill="#0c0c0c"  textLength="98.05" lengthAdjust="spacingAndGlyphs"  stroke="#0c0c0c" stroke-width="0.32">Software &amp; Tools</text>
<text x="319.63" y="589.60" font-size="13.2" fill="#1a6ec1"  textLength="30.83" lengthAdjust="spacingAndGlyphs"  stroke="#1a6ec1" stroke-width="0.32">$500</text>
<text x="12.01" y="609.10" font-size="13.2" fill="#0c0c0c"  textLength="140.91" lengthAdjust="spacingAndGlyphs"  stroke="#0c0c0c" stroke-width="0.32">Marketing (fixed budget)</text>
<text x="308.07" y="609.10" font-size="13.2" fill="#1a6ec1"  textLength="42.39" lengthAdjust="spacingAndGlyphs"  stroke="#1a6ec1" stroke-width="0.32">$2.000</text>
<text x="12.41" y="628.60" font-size="13.2" fill="#0c0c0c"  textLength="105.30" lengthAdjust="spacingAndGlyphs"  stroke="#0c0c0c" stroke-width="0.32">Other Fixed Costs</text>
<text x="308.07" y="628.60" font-size="13.2" fill="#1a6ec1"  textLength="42.39" lengthAdjust="spacingAndGlyphs"  stroke="#1a6ec1" stroke-width="0.32">$2.500</text>
<text x="12.91" y="667.00" font-size="13.2" fill="#0c0c0c" font-weight="bold" textLength="147.80" lengthAdjust="spacingAndGlyphs"  stroke="#0c0c0c" stroke-width="0.28">TOTAL FIXED COSTS (calc)</text>
<text x="299.59" y="667.00" font-size="13.2" fill="#0c0c0c" font-weight="bold" textLength="50.99" lengthAdjust="spacingAndGlyphs"  stroke="#0c0c0c" stroke-width="0.28">$15.000</text>
<text x="12.43" y="686.80" font-size="13.2" fill="#0c0c0c"  textLength="153.23" lengthAdjust="spacingAndGlyphs"  stroke="#0c0c0c" stroke-width="0.32">Scenario Fixed Costs (calc)</text>
<text x="300.09" y="686.80" font-size="13.2" fill="#0c0c0c"  textLength="50.37" lengthAdjust="spacingAndGlyphs"  stroke="#0c0c0c" stroke-width="0.32">$15.000</text>
<text x="18.35" y="729.40" font-size="12.0" fill="#ffffff" font-weight="bold" textLength="231.11" lengthAdjust="spacingAndGlyphs"  stroke="#ffffff" stroke-width="0.28">C — PRODUCT PRICING &amp; VARIABLE COSTS</text>
<text x="73.93" y="777.20" font-size="13.2" fill="#ffffff" font-weight="bold" textLength="103.90" lengthAdjust="spacingAndGlyphs"  stroke="#ffffff" stroke-width="0.28">Product / Service</text>
<text x="258.86" y="777.20" font-size="13.2" fill="#ffffff" font-weight="bold" textLength="80.99" lengthAdjust="spacingAndGlyphs"  stroke="#ffffff" stroke-width="0.28">Base Price ($)</text>
<text x="362.83" y="777.20" font-size="13.2" fill="#ffffff" font-weight="bold" textLength="89.93" lengthAdjust="spacingAndGlyphs"  stroke="#ffffff" stroke-width="0.28">COGS / Unit ($)</text>
<text x="468.20" y="757.30" font-size="13.2" fill="#ffffff" font-weight="bold" textLength="97.37" lengthAdjust="spacingAndGlyphs"  stroke="#ffffff" stroke-width="0.28">Other Variable /</text>
<text x="495.79" y="777.20" font-size="13.2" fill="#ffffff" font-weight="bold" textLength="46.11" lengthAdjust="spacingAndGlyphs"  stroke="#ffffff" stroke-width="0.28">Unit ($)</text>
<text x="575.63" y="777.20" font-size="13.2" fill="#ffffff" font-weight="bold" textLength="94.01" lengthAdjust="spacingAndGlyphs"  stroke="#ffffff" stroke-width="0.28">Base Units / Mo</text>
<text x="698.03" y="777.20" font-size="13.2" fill="#ffffff" font-weight="bold" textLength="46.56" lengthAdjust="spacingAndGlyphs"  stroke="#ffffff" stroke-width="0.28">Sc Price</text>
<text x="784.43" y="777.20" font-size="13.2" fill="#ffffff" font-weight="bold" textLength="48.07" lengthAdjust="spacingAndGlyphs"  stroke="#ffffff" stroke-width="0.28">Sc Units</text>
<text x="858.12" y="757.30" font-size="13.2" fill="#ffffff" font-weight="bold" textLength="86.30" lengthAdjust="spacingAndGlyphs"  stroke="#ffffff" stroke-width="0.28">Scenario Price</text>
<text x="892.85" y="777.20" font-size="13.2" fill="#ffffff" font-weight="bold" textLength="17.50" lengthAdjust="spacingAndGlyphs"  stroke="#ffffff" stroke-width="0.28">($)</text>
<text x="959.82" y="777.20" font-size="13.2" fill="#ffffff" font-weight="bold" textLength="87.19" lengthAdjust="spacingAndGlyphs"  stroke="#ffffff" stroke-width="0.28">Scenario Units</text>
<text x="1080.32" y="757.30" font-size="13.2" fill="#ffffff" font-weight="bold" textLength="52.01" lengthAdjust="spacingAndGlyphs"  stroke="#ffffff" stroke-width="0.28">Scenario</text>
<text x="1069.52" y="777.20" font-size="13.2" fill="#ffffff" font-weight="bold" textLength="72.55" lengthAdjust="spacingAndGlyphs"  stroke="#ffffff" stroke-width="0.28">Revenue ($)</text>
<text x="1166.61" y="757.30" font-size="13.2" fill="#ffffff" font-weight="bold" textLength="111.18" lengthAdjust="spacingAndGlyphs"  stroke="#ffffff" stroke-width="0.28">Total Variable Cost</text>
<text x="1213.65" y="777.20" font-size="13.2" fill="#ffffff" font-weight="bold" textLength="17.60" lengthAdjust="spacingAndGlyphs"  stroke="#ffffff" stroke-width="0.28">($)</text>
<text x="1303.02" y="757.30" font-size="13.2" fill="#ffffff" font-weight="bold" textLength="87.42" lengthAdjust="spacingAndGlyphs"  stroke="#ffffff" stroke-width="0.28">Contribution $</text>
<text x="1330.93" y="777.20" font-size="13.2" fill="#ffffff" font-weight="bold" textLength="32.53" lengthAdjust="spacingAndGlyphs"  stroke="#ffffff" stroke-width="0.28">(calc)</text>
<text x="12.90" y="800.00" font-size="13.2" fill="#1a6ec1"   stroke="#1a6ec1" stroke-width="0.32">Core Product</text>
<text x="299.96" y="800.00" font-size="13.2" fill="#1a6ec1"  textLength="50.10" lengthAdjust="spacingAndGlyphs"  stroke="#1a6ec1" stroke-width="0.32">$120,00</text>
<text x="417.27" y="800.00" font-size="13.2" fill="#1a6ec1"  textLength="42.39" lengthAdjust="spacingAndGlyphs"  stroke="#1a6ec1" stroke-width="0.32">$50,00</text>
<text x="534.58" y="800.00" font-size="13.2" fill="#1a6ec1"  textLength="34.68" lengthAdjust="spacingAndGlyphs"  stroke="#1a6ec1" stroke-width="0.32">$5,00</text>
<text x="648.24" y="800.00" font-size="13.2" fill="#1a6ec1"  textLength="23.12" lengthAdjust="spacingAndGlyphs"  stroke="#1a6ec1" stroke-width="0.32">400</text>
<text x="719.15" y="800.00" font-size="13.2" fill="#0c0c0c"  textLength="47.01" lengthAdjust="spacingAndGlyphs"  stroke="#0c0c0c" stroke-width="0.32">100,0%</text>
<text x="797.55" y="800.00" font-size="13.2" fill="#0c0c0c"  textLength="47.01" lengthAdjust="spacingAndGlyphs"  stroke="#0c0c0c" stroke-width="0.32">100,0%</text>
<text x="903.86" y="800.00" font-size="13.2" fill="#0c0c0c"  textLength="50.10" lengthAdjust="spacingAndGlyphs"  stroke="#0c0c0c" stroke-width="0.32">$120,00</text>
<text x="1024.24" y="800.00" font-size="13.2" fill="#0c0c0c"  textLength="23.12" lengthAdjust="spacingAndGlyphs"  stroke="#0c0c0c" stroke-width="0.32">400</text>
<text x="1106.86" y="800.00" font-size="13.2" fill="#0c0c0c"  textLength="50.10" lengthAdjust="spacingAndGlyphs"  stroke="#0c0c0c" stroke-width="0.32">$48.000</text>
<text x="1232.16" y="800.00" font-size="13.2" fill="#0c0c0c"  textLength="50.10" lengthAdjust="spacingAndGlyphs"  stroke="#0c0c0c" stroke-width="0.32">$22.000</text>
<text x="1356.76" y="800.00" font-size="13.2" fill="#0c0c0c"  textLength="50.10" lengthAdjust="spacingAndGlyphs"  stroke="#0c0c0c" stroke-width="0.32">$26.000</text>
<text x="12.50" y="823.70" font-size="13.2" fill="#1a6ec1"   stroke="#1a6ec1" stroke-width="0.32">Premium Tier</text>
<text x="299.96" y="823.70" font-size="13.2" fill="#1a6ec1"  textLength="50.10" lengthAdjust="spacingAndGlyphs"  stroke="#1a6ec1" stroke-width="0.32">$250,00</text>
<text x="417.27" y="823.70" font-size="13.2" fill="#1a6ec1"  textLength="42.39" lengthAdjust="spacingAndGlyphs"  stroke="#1a6ec1" stroke-width="0.32">$90,00</text>
<text x="526.87" y="823.70" font-size="13.2" fill="#1a6ec1"  textLength="42.39" lengthAdjust="spacingAndGlyphs"  stroke="#1a6ec1" stroke-width="0.32">$10,00</text>
<text x="648.24" y="823.70" font-size="13.2" fill="#1a6ec1"  textLength="23.12" lengthAdjust="spacingAndGlyphs"  stroke="#1a6ec1" stroke-width="0.32">150</text>
<text x="719.15" y="823.70" font-size="13.2" fill="#0c0c0c"  textLength="47.01" lengthAdjust="spacingAndGlyphs"  stroke="#0c0c0c" stroke-width="0.32">100,0%</text>
<text x="797.55" y="823.70" font-size="13.2" fill="#0c0c0c"  textLength="47.01" lengthAdjust="spacingAndGlyphs"  stroke="#0c0c0c" stroke-width="0.32">100,0%</text>
<text x="903.86" y="823.70" font-size="13.2" fill="#0c0c0c"  textLength="50.10" lengthAdjust="spacingAndGlyphs"  stroke="#0c0c0c" stroke-width="0.32">$250,00</text>
<text x="1024.24" y="823.70" font-size="13.2" fill="#0c0c0c"  textLength="23.12" lengthAdjust="spacingAndGlyphs"  stroke="#0c0c0c" stroke-width="0.32">150</text>
<text x="1106.86" y="823.70" font-size="13.2" fill="#0c0c0c"  textLength="50.10" lengthAdjust="spacingAndGlyphs"  stroke="#0c0c0c" stroke-width="0.32">$37.500</text>
<text x="1232.16" y="823.70" font-size="13.2" fill="#0c0c0c"  textLength="50.10" lengthAdjust="spacingAndGlyphs"  stroke="#0c0c0c" stroke-width="0.32">$15.000</text>
<text x="1356.76" y="823.70" font-size="13.2" fill="#0c0c0c"  textLength="50.10" lengthAdjust="spacingAndGlyphs"  stroke="#0c0c0c" stroke-width="0.32">$22.500</text>
<text x="12.50" y="847.10" font-size="13.2" fill="#1a6ec1"   stroke="#1a6ec1" stroke-width="0.32">Entry Product</text>
<text x="307.67" y="847.10" font-size="13.2" fill="#1a6ec1"  textLength="42.39" lengthAdjust="spacingAndGlyphs"  stroke="#1a6ec1" stroke-width="0.32">$60,00</text>
<text x="417.27" y="847.10" font-size="13.2" fill="#1a6ec1"  textLength="42.39" lengthAdjust="spacingAndGlyphs"  stroke="#1a6ec1" stroke-width="0.32">$25,00</text>
<text x="534.58" y="847.10" font-size="13.2" fill="#1a6ec1"  textLength="34.68" lengthAdjust="spacingAndGlyphs"  stroke="#1a6ec1" stroke-width="0.32">$3,00</text>
<text x="648.24" y="847.10" font-size="13.2" fill="#1a6ec1"  textLength="23.12" lengthAdjust="spacingAndGlyphs"  stroke="#1a6ec1" stroke-width="0.32">600</text>
<text x="719.15" y="847.10" font-size="13.2" fill="#0c0c0c"  textLength="47.01" lengthAdjust="spacingAndGlyphs"  stroke="#0c0c0c" stroke-width="0.32">100,0%</text>
<text x="797.55" y="847.10" font-size="13.2" fill="#0c0c0c"  textLength="47.01" lengthAdjust="spacingAndGlyphs"  stroke="#0c0c0c" stroke-width="0.32">100,0%</text>
<text x="911.57" y="847.10" font-size="13.2" fill="#0c0c0c"  textLength="42.39" lengthAdjust="spacingAndGlyphs"  stroke="#0c0c0c" stroke-width="0.32">$60,00</text>
<text x="1024.24" y="847.10" font-size="13.2" fill="#0c0c0c"  textLength="23.12" lengthAdjust="spacingAndGlyphs"  stroke="#0c0c0c" stroke-width="0.32">600</text>
<text x="1106.86" y="847.10" font-size="13.2" fill="#0c0c0c"  textLength="50.10" lengthAdjust="spacingAndGlyphs"  stroke="#0c0c0c" stroke-width="0.32">$36.000</text>
<text x="1232.16" y="847.10" font-size="13.2" fill="#0c0c0c"  textLength="50.10" lengthAdjust="spacingAndGlyphs"  stroke="#0c0c0c" stroke-width="0.32">$16.800</text>
<text x="1356.76" y="847.10" font-size="13.2" fill="#0c0c0c"  textLength="50.10" lengthAdjust="spacingAndGlyphs"  stroke="#0c0c0c" stroke-width="0.32">$19.200</text>
<text x="12.90" y="870.60" font-size="13.2" fill="#1a6ec1"   stroke="#1a6ec1" stroke-width="0.32">Service Add-on</text>
<text x="299.96" y="870.60" font-size="13.2" fill="#1a6ec1"  textLength="50.10" lengthAdjust="spacingAndGlyphs"  stroke="#1a6ec1" stroke-width="0.32">$180,00</text>
<text x="417.27" y="870.60" font-size="13.2" fill="#1a6ec1"  textLength="42.39" lengthAdjust="spacingAndGlyphs"  stroke="#1a6ec1" stroke-width="0.32">$40,00</text>
<text x="534.58" y="870.60" font-size="13.2" fill="#1a6ec1"  textLength="34.68" lengthAdjust="spacingAndGlyphs"  stroke="#1a6ec1" stroke-width="0.32">$8,00</text>
<text x="648.24" y="870.60" font-size="13.2" fill="#1a6ec1"  textLength="23.12" lengthAdjust="spacingAndGlyphs"  stroke="#1a6ec1" stroke-width="0.32">100</text>
<text x="719.15" y="870.60" font-size="13.2" fill="#0c0c0c"  textLength="47.01" lengthAdjust="spacingAndGlyphs"  stroke="#0c0c0c" stroke-width="0.32">100,0%</text>
<text x="797.55" y="870.60" font-size="13.2" fill="#0c0c0c"  textLength="47.01" lengthAdjust="spacingAndGlyphs"  stroke="#0c0c0c" stroke-width="0.32">100,0%</text>
<text x="903.86" y="870.60" font-size="13.2" fill="#0c0c0c"  textLength="50.10" lengthAdjust="spacingAndGlyphs"  stroke="#0c0c0c" stroke-width="0.32">$180,00</text>
<text x="1024.24" y="870.60" font-size="13.2" fill="#0c0c0c"  textLength="23.12" lengthAdjust="spacingAndGlyphs"  stroke="#0c0c0c" stroke-width="0.32">100</text>
<text x="1106.86" y="870.60" font-size="13.2" fill="#0c0c0c"  textLength="50.10" lengthAdjust="spacingAndGlyphs"  stroke="#0c0c0c" stroke-width="0.32">$18.000</text>
<text x="1239.87" y="870.60" font-size="13.2" fill="#0c0c0c"  textLength="42.39" lengthAdjust="spacingAndGlyphs"  stroke="#0c0c0c" stroke-width="0.32">$4.800</text>
<text x="1356.76" y="870.60" font-size="13.2" fill="#0c0c0c"  textLength="50.10" lengthAdjust="spacingAndGlyphs"  stroke="#0c0c0c" stroke-width="0.32">$13.200</text>
<text x="12.50" y="894.00" font-size="13.2" fill="#1a6ec1"   stroke="#1a6ec1" stroke-width="0.32">Digital Subscription</text>
<text x="307.67" y="894.00" font-size="13.2" fill="#1a6ec1"  textLength="42.39" lengthAdjust="spacingAndGlyphs"  stroke="#1a6ec1" stroke-width="0.32">$45,00</text>
<text x="424.98" y="894.00" font-size="13.2" fill="#1a6ec1"  textLength="34.68" lengthAdjust="spacingAndGlyphs"  stroke="#1a6ec1" stroke-width="0.32">$5,00</text>
<text x="534.58" y="894.00" font-size="13.2" fill="#1a6ec1"  textLength="34.68" lengthAdjust="spacingAndGlyphs"  stroke="#1a6ec1" stroke-width="0.32">$2,00</text>
<text x="636.68" y="894.00" font-size="13.2" fill="#1a6ec1"  textLength="34.68" lengthAdjust="spacingAndGlyphs"  stroke="#1a6ec1" stroke-width="0.32">1.200</text>
<text x="719.15" y="894.00" font-size="13.2" fill="#0c0c0c"  textLength="47.01" lengthAdjust="spacingAndGlyphs"  stroke="#0c0c0c" stroke-width="0.32">100,0%</text>
<text x="797.55" y="894.00" font-size="13.2" fill="#0c0c0c"  textLength="47.01" lengthAdjust="spacingAndGlyphs"  stroke="#0c0c0c" stroke-width="0.32">100,0%</text>
<text x="911.57" y="894.00" font-size="13.2" fill="#0c0c0c"  textLength="42.39" lengthAdjust="spacingAndGlyphs"  stroke="#0c0c0c" stroke-width="0.32">$45,00</text>
<text x="1012.68" y="894.00" font-size="13.2" fill="#0c0c0c"  textLength="34.68" lengthAdjust="spacingAndGlyphs"  stroke="#0c0c0c" stroke-width="0.32">1.200</text>
<text x="1106.86" y="894.00" font-size="13.2" fill="#0c0c0c"  textLength="50.10" lengthAdjust="spacingAndGlyphs"  stroke="#0c0c0c" stroke-width="0.32">$54.000</text>
<text x="1239.87" y="894.00" font-size="13.2" fill="#0c0c0c"  textLength="42.39" lengthAdjust="spacingAndGlyphs"  stroke="#0c0c0c" stroke-width="0.32">$8.400</text>
<text x="1356.76" y="894.00" font-size="13.2" fill="#0c0c0c"  textLength="50.10" lengthAdjust="spacingAndGlyphs"  stroke="#0c0c0c" stroke-width="0.32">$45.600</text>
<text x="12.21" y="913.00" font-size="13.2" fill="#ffffff" font-weight="bold" textLength="87.04" lengthAdjust="spacingAndGlyphs"  stroke="#ffffff" stroke-width="0.28">Portfolio Total</text>
<text x="1098.79" y="913.00" font-size="13.2" fill="#0c0c0c" font-weight="bold" textLength="58.08" lengthAdjust="spacingAndGlyphs"  stroke="#0c0c0c" stroke-width="0.28">$193.500</text>
<text x="1231.90" y="913.00" font-size="13.2" fill="#0c0c0c" font-weight="bold" textLength="49.67" lengthAdjust="spacingAndGlyphs"  stroke="#0c0c0c" stroke-width="0.28">$67.000</text>
<text x="1348.79" y="913.00" font-size="13.2" fill="#0c0c0c" font-weight="bold" textLength="58.38" lengthAdjust="spacingAndGlyphs"  stroke="#0c0c0c" stroke-width="0.28">$126.500</text>
<text x="12.22" y="932.70" font-size="13.2" fill="#0c0c0c" font-weight="bold" textLength="191.10" lengthAdjust="spacingAndGlyphs"  stroke="#0c0c0c" stroke-width="0.28">Blended Contribution Margin %</text>
<text x="1119.50" y="932.70" font-size="13.2" fill="#0c0c0c" font-weight="bold" textLength="37.13" lengthAdjust="spacingAndGlyphs"  stroke="#0c0c0c" stroke-width="0.28">65,4%</text>
<text x="12.71" y="952.30" font-size="13.2" fill="#0c0c0c" font-weight="bold" textLength="113.18" lengthAdjust="spacingAndGlyphs"  stroke="#0c0c0c" stroke-width="0.28">Scenario Net Profit</text>
<text x="1098.79" y="952.30" font-size="13.2" fill="#0c0c0c" font-weight="bold" textLength="58.09" lengthAdjust="spacingAndGlyphs"  stroke="#0c0c0c" stroke-width="0.28">$111.500</text>
<text x="12.02" y="972.00" font-size="13.2" fill="#0c0c0c"  textLength="173.41" lengthAdjust="spacingAndGlyphs"  stroke="#0c0c0c" stroke-width="0.32">Portfolio Break-Even Revenue</text>
<text x="1106.59" y="972.00" font-size="13.2" fill="#0c0c0c"  textLength="50.28" lengthAdjust="spacingAndGlyphs"  stroke="#0c0c0c" stroke-width="0.32">$22.945</text>
<rect x="10.8" y="280.5" width="1397.8" height="24.8" fill="none" stroke="#ffffff" stroke-width="1.3"/>
<rect x="9.1" y="278.9" width="1402.0" height="28.5" fill="none" stroke="#1d6b3a" stroke-width="2.2"/>
<rect x="1406.60" y="303.40" width="7.80" height="7.60" fill="#ffffff" />
<rect x="1407.60" y="304.40" width="6.20" height="6.00" fill="#1d6b3a" />
</svg>
</body></html>
